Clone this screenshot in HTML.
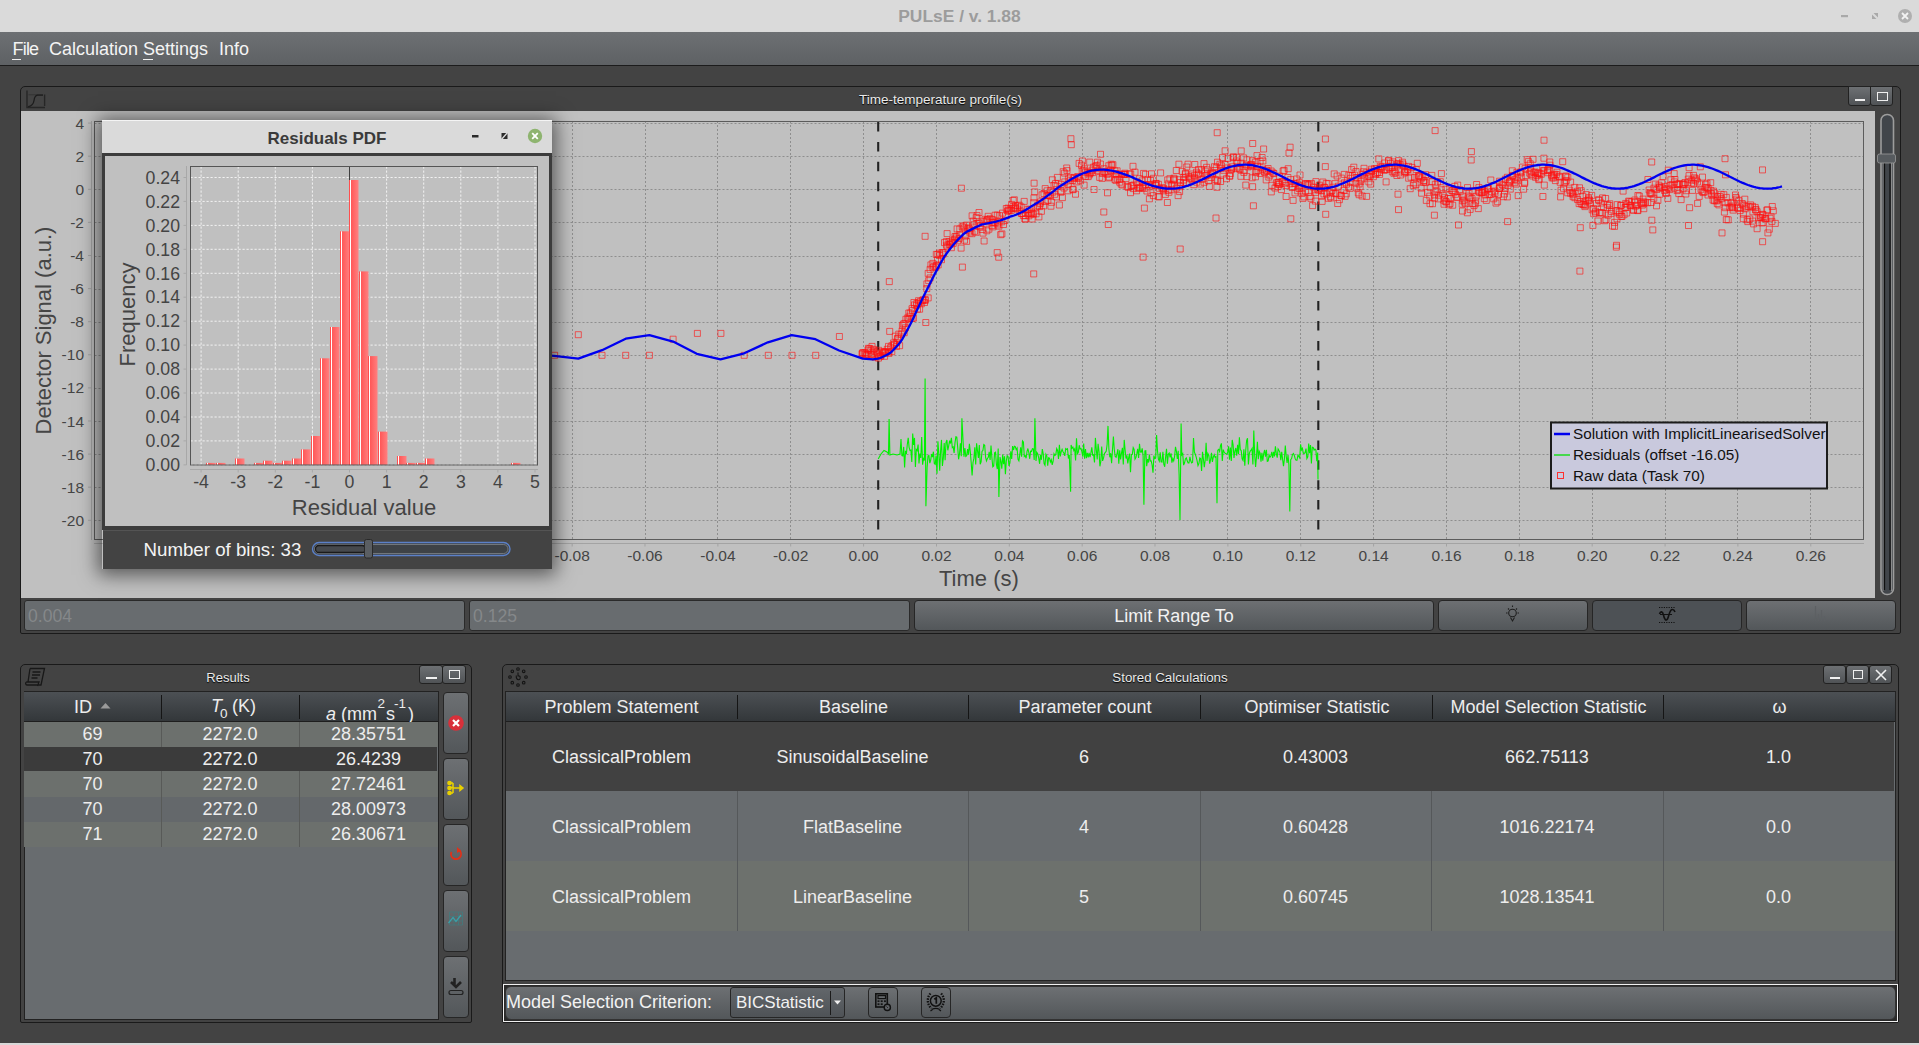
<!DOCTYPE html>
<html><head><meta charset="utf-8">
<style>
*{box-sizing:border-box;margin:0;padding:0}
html,body{width:1919px;height:1045px;overflow:hidden}
body{position:relative;background:#434343;font-family:"Liberation Sans",sans-serif;color:#f2f2f2}
.a{position:absolute}
#title{left:0;top:0;width:1919px;height:32px;background:#dadada}
#title .t{left:0;width:1919px;top:6px;text-align:center;font-weight:bold;font-size:17.4px;color:#9c9c9c}
#menu{left:0;top:32px;width:1919px;height:33px;background:linear-gradient(#6d7073,#5e6164)}
#menu span{position:absolute;top:7px;font-size:18px;color:#f4f4f4}
#mline{left:0;top:65px;width:1919px;height:1px;background:#1c1c1c}
.frame{border:1px solid #1a1a1a;border-radius:5px 5px 2px 2px}
.ftitle{font-size:13.5px;color:#eaeaea;text-shadow:0 1px 1px #000;text-align:center}
.fbtn{background:linear-gradient(#6d7073,#505356);border:1px solid #222;border-radius:3px}
.btn{background:linear-gradient(#6d7073,#53575a);border:1px solid #262626;border-radius:4px}
.field{background:#686c6f;border:1px solid #2a2a2a;border-radius:3px}
.hdr{background:linear-gradient(#4c5054,#33373a);}
.hdr span,.cell{position:absolute;text-align:center;font-size:18px;color:#ededed}
svg text{font-family:"Liberation Sans",sans-serif}
</style></head><body>

<div id="title" class="a"><div class="a t">PULsE / v. 1.88</div>
<svg class="a" style="left:0;top:0" width="1919" height="32">
<rect x="1841" y="15" width="7" height="2.2" fill="#a9a9a9"/>
<path d="M1872 19 L1872 14.5 L1876.5 19 Z M1878 13 L1878 17.5 L1873.5 13 Z" fill="#a9a9a9"/>
<circle cx="1905" cy="16" r="7" fill="#afafaf"/>
<path d="M1902 13 L1908 19 M1908 13 L1902 19" stroke="#f2f2f2" stroke-width="1.8"/>
</svg>
</div>
<div id="menu" class="a">
<span style="left:12.5px;letter-spacing:-0.8px">File</span>
<span style="left:49px">Calculation Settings</span>
<span style="left:219px">Info</span>
<div class="a" style="left:12px;top:27px;width:9px;height:1px;background:#f0f0f0"></div>
<div class="a" style="left:143px;top:27px;width:10px;height:1px;background:#f0f0f0"></div>
</div>
<div id="mline" class="a"></div>

<!-- ========== chart frame ========== -->
<div class="a frame" style="left:20px;top:86px;width:1881px;height:548px"></div>
<svg class="a" style="left:26px;top:89px" width="22" height="20"><path d="M1 1.5 V18.5 H19 M18.6 5.5 V17" fill="none" stroke="#262626" stroke-width="1.4"/><path d="M2.5 5.8 H17" stroke="#333" stroke-width="1"/><path d="M2.2 17.6 C6 17 7.5 15 8 11.5 C8.5 8 9.5 6.5 11.5 6.2 H17" fill="none" stroke="#1c1c1c" stroke-width="1.3"/></svg>
<div class="a ftitle" style="left:600px;width:681px;top:92px">Time-temperature profile(s)</div>
<div class="a fbtn" style="left:1848px;top:86px;width:23px;height:20px;border-radius:0 0 3px 3px"><div class="a" style="left:6px;top:12px;width:10px;height:2px;background:#f0f0f0"></div></div>
<div class="a fbtn" style="left:1870px;top:86px;width:23px;height:20px;border-radius:0 0 3px 3px"><div class="a" style="left:6px;top:5px;width:11px;height:9px;border:1.5px solid #f0f0f0"></div></div>
<div class="a" style="left:21px;top:111px;width:1854px;height:487px;background:#c0c0c0"></div>

<svg class="a" style="left:0;top:0" width="1919" height="1045">
<g font-size="15.5" fill="#454545">
<path d="M572.5 121V539.5M645.5 121V539.5M717.5 121V539.5M790.5 121V539.5M863.5 121V539.5M936.5 121V539.5M1009.5 121V539.5M1082.5 121V539.5M1155.5 121V539.5M1227.5 121V539.5M1300.5 121V539.5M1373.5 121V539.5M1446.5 121V539.5M1519.5 121V539.5M1592.5 121V539.5M1665.5 121V539.5M1737.5 121V539.5M1810.5 121V539.5M94.5 123.5H1863.5M94.5 156.5H1863.5M94.5 189.5H1863.5M94.5 222.5H1863.5M94.5 256.5H1863.5M94.5 289.5H1863.5M94.5 322.5H1863.5M94.5 355.5H1863.5M94.5 388.5H1863.5M94.5 421.5H1863.5M94.5 454.5H1863.5M94.5 487.5H1863.5M94.5 520.5H1863.5" stroke="#8e8e8e" stroke-width="1" stroke-dasharray="2,2" fill="none"/>
<rect x="94.5" y="121.5" width="1769" height="418" fill="none" stroke="#5c5c5c" stroke-width="1"/>
<path d="M91.5 121V540 M94 543.5H1864" stroke="#a3a3a3" stroke-width="1"/>
<path d="M572.2 543.5v3M645 543.5v3M717.9 543.5v3M790.7 543.5v3M863.6 543.5v3M936.5 543.5v3M1009.3 543.5v3M1082.2 543.5v3M1155 543.5v3M1227.9 543.5v3M1300.8 543.5v3M1373.6 543.5v3M1446.5 543.5v3M1519.3 543.5v3M1592.2 543.5v3M1665.1 543.5v3M1737.9 543.5v3M1810.8 543.5v3M88 123.1h3M88 156.2h3M88 189.3h3M88 222.4h3M88 255.5h3M88 288.6h3M88 321.7h3M88 354.8h3M88 387.9h3M88 421h3M88 454.1h3M88 487.2h3M88 520.3h3" stroke="#a3a3a3" stroke-width="1"/>
<g text-anchor="middle"><text x="572.2" y="560.5">-0.08</text><text x="645" y="560.5">-0.06</text><text x="717.9" y="560.5">-0.04</text><text x="790.7" y="560.5">-0.02</text><text x="863.6" y="560.5">0.00</text><text x="936.5" y="560.5">0.02</text><text x="1009.3" y="560.5">0.04</text><text x="1082.2" y="560.5">0.06</text><text x="1155" y="560.5">0.08</text><text x="1227.9" y="560.5">0.10</text><text x="1300.8" y="560.5">0.12</text><text x="1373.6" y="560.5">0.14</text><text x="1446.5" y="560.5">0.16</text><text x="1519.3" y="560.5">0.18</text><text x="1592.2" y="560.5">0.20</text><text x="1665.1" y="560.5">0.22</text><text x="1737.9" y="560.5">0.24</text><text x="1810.8" y="560.5">0.26</text></g>
<g text-anchor="end"><text x="84" y="128.6">4</text><text x="84" y="161.7">2</text><text x="84" y="194.8">0</text><text x="84" y="227.9">-2</text><text x="84" y="261">-4</text><text x="84" y="294.1">-6</text><text x="84" y="327.2">-8</text><text x="84" y="360.3">-10</text><text x="84" y="393.4">-12</text><text x="84" y="426.5">-14</text><text x="84" y="459.6">-16</text><text x="84" y="492.7">-18</text><text x="84" y="525.8">-20</text></g>
<text x="978.9" y="586" font-size="22" text-anchor="middle">Time (s)</text>
<text transform="translate(50.5 330.5) rotate(-90)" font-size="22" text-anchor="middle">Detector Signal (a.u.)</text>
</g>
<path d="M878.2 122V531 M1318.3 122V531" stroke="#222" stroke-width="2.1" stroke-dasharray="9.5,10.4"/>
<path d="M878.2 459 L881 454 L884 450.5 L887 452 L888.5 454 L889.1 419 L889.9 455 L893 454 L897 455 L900 454 L901 439 L901.9 455.6 L902.8 455.9 L903.7 446.9 L904.6 467.5 L905.5 450.9 L906.4 454 L907.3 444.5 L908.2 437.9 L909.1 447.3 L910 450.5 L910.9 450.1 L911.8 461.9 L912.7 433.5 L913.6 444.9 L914.5 437.9 L915.4 466.9 L916.3 449.5 L917.2 450.6 L918.1 444.5 L919 463.4 L919.9 453.5 L920.8 458 L921.7 437 L922.6 464.7 L923.5 458.7 L924.4 460.4 L925.1 378.4 L925.9 506.3 L927.1 467.4 L928 455.9 L928.9 455.6 L929.8 463.2 L930.7 460.1 L931.6 454 L932.5 457.1 L933.4 451.7 L934.3 463.4 L935.2 464.3 L936.1 455.5 L937 473.8 L937.9 441.2 L938.8 453.2 L939.7 470.8 L940.6 451.1 L941.5 439.9 L942.4 465.9 L943.3 458.1 L944.2 443 L945.1 460.1 L946 442.6 L946.9 440 L947.8 450.3 L948.7 445.8 L949.6 440.6 L950.5 443.5 L951.4 437.8 L952.3 447.7 L953.2 446.9 L954.1 452.9 L955 442.6 L955.9 436.8 L956.8 437.2 L957.7 447.4 L958.6 459.3 L959.5 453.8 L960.4 443.4 L961.3 456.2 L961.9 418.2 L963.1 441.8 L964 456.8 L964.9 448 L965.8 456.5 L966.7 455.7 L967.6 449.2 L968.5 454.6 L969.4 443.9 L970.3 451.7 L971.2 462.8 L972.1 475.5 L973 462.5 L973.9 458.4 L974.8 447.3 L975.7 464.5 L976.6 443.2 L977.5 450.7 L978.4 457.9 L979.3 445 L980.2 464.3 L981.1 461.9 L982 451.4 L982.9 450.5 L983.8 444.5 L984.7 445.2 L985.6 457.3 L986.5 460.9 L987.4 458.5 L988.3 457.3 L989.2 451.9 L990.1 460 L991 445.5 L991.9 457.7 L992.8 466.9 L993.7 466.1 L994.6 452.9 L995.5 452.3 L996.4 464.2 L997.3 469.1 L998.2 448.6 L998.9 497.1 L1000 457.1 L1000.9 461.3 L1001.8 468.7 L1002.7 454.6 L1003.6 464.1 L1004.5 456.2 L1005.4 474.3 L1006.3 460.9 L1007.2 455.8 L1008.1 456.8 L1009 465.9 L1009.9 462.9 L1010.8 451.2 L1011.7 458.9 L1012.6 446 L1013.5 450 L1014.4 446.2 L1015.3 446.6 L1016.2 449.6 L1017.1 448.1 L1018 459.3 L1018.9 460.8 L1019.8 454.4 L1020.7 447.2 L1021.6 456.6 L1022.5 440.9 L1023.4 441.9 L1024.3 456.5 L1025.2 455.5 L1026.1 458.3 L1027 451.6 L1027.9 448.5 L1028.8 452.5 L1029.7 458.8 L1030.6 451.2 L1031.5 451.5 L1032.4 448.7 L1033.3 448.9 L1034.2 459.9 L1034.9 418.2 L1036 461 L1036.9 452.4 L1037.8 454 L1038.7 457.8 L1039.6 463.8 L1040.5 454.8 L1041.4 459.8 L1042.3 449 L1043.2 453.6 L1044.1 463.5 L1045 465.3 L1045.9 454.2 L1046.8 455.8 L1047.7 465.6 L1048.6 457.8 L1049.5 458.2 L1050.4 462 L1051.3 459.8 L1052.2 464.9 L1053.1 461.5 L1054 453.8 L1054.9 455.4 L1055.8 454.7 L1056.7 448.6 L1057.6 450.5 L1058.5 458.9 L1059.4 444.9 L1060.3 456.4 L1061.2 451.7 L1062.1 449.4 L1063 451.8 L1063.9 453 L1064.8 455.9 L1065.7 448.6 L1066.6 449.5 L1067.5 448.8 L1068.4 458.5 L1069.3 454.9 L1070.6 491.7 L1071.1 444.9 L1072 448.2 L1072.9 447.1 L1073.8 450.5 L1074.7 448.9 L1075.6 460.5 L1076.5 438.2 L1077.4 453.7 L1078.3 452.3 L1079.2 445.2 L1080.1 449 L1081 448.6 L1081.9 451.7 L1082.8 456.6 L1083.7 443.5 L1084.6 458.6 L1085.5 449.1 L1086.4 458.1 L1087.3 452.8 L1088.2 457.3 L1089.1 452.9 L1090 457.1 L1090.9 453 L1091.8 447.3 L1092.7 455.1 L1093.6 454.7 L1094.5 462.4 L1095.4 437.9 L1096.3 449.5 L1097.2 459.5 L1098.1 443.9 L1099 451.6 L1099.9 466.3 L1100.8 461.4 L1101.7 446.5 L1102.6 460.9 L1103.5 458.2 L1104.4 453.8 L1105.3 452.4 L1106.2 451.3 L1107.1 444.6 L1108 425.9 L1108.9 449.3 L1109.8 457.3 L1110.7 453.2 L1111.6 463.2 L1112.5 449.5 L1113.4 436.6 L1114.3 449.8 L1115.2 456.5 L1116.1 457.3 L1117 454 L1117.9 449.2 L1118.8 463.6 L1119.7 450.4 L1120.6 459.5 L1121.5 453.1 L1122.4 447.9 L1123.3 464.4 L1124.2 439.9 L1125.1 449.8 L1126 458.5 L1126.9 455.4 L1127.8 463.4 L1128.7 457.6 L1129.6 453.5 L1130.5 472.2 L1131.4 454.7 L1132.3 454.3 L1133.2 447.6 L1134.1 449.4 L1135 459.2 L1135.9 457.5 L1136.8 453.9 L1137.7 448.8 L1138.6 458 L1139.5 443.7 L1140.4 452.1 L1141.3 452.2 L1142.2 448.4 L1143.1 456 L1143.9 504.7 L1144.9 451 L1145.8 450.8 L1146.7 466.3 L1147.6 459.1 L1148.5 462.5 L1149.4 454.6 L1150.3 461 L1151.2 460.8 L1152.1 465 L1153 472.6 L1153.9 455.6 L1154.8 458.6 L1155.7 457.9 L1156.6 435 L1157.5 450.8 L1158.4 459 L1159.3 461.1 L1160.2 452.3 L1161.1 461.8 L1162 462.1 L1162.9 451.7 L1163.8 464.1 L1164.7 466.7 L1165.6 457.3 L1166.5 448.7 L1167.4 463.7 L1168.3 454.2 L1169.2 453 L1170.1 457.4 L1171 453.3 L1171.9 462.7 L1172.8 458.6 L1173.7 460.8 L1174.6 456.3 L1175.5 446.8 L1176.4 451.3 L1177.3 459 L1178.2 450.8 L1179.1 474.6 L1180 520 L1181.1 423.6 L1181.8 454.8 L1182.7 453.6 L1183.6 465.1 L1184.5 463.1 L1185.4 458.9 L1186.3 457.8 L1187.2 460.8 L1188.1 462.9 L1189 462.9 L1189.9 456.8 L1190.8 461 L1191.7 463 L1192.6 462.3 L1193.5 438 L1194.4 452.1 L1195.3 454.3 L1196.2 457.2 L1197.1 460.8 L1198 465.7 L1198.9 463.6 L1199.8 458 L1200.7 458.6 L1201.6 471 L1202.5 451.7 L1203.4 458.8 L1204.3 467.1 L1205.2 460.1 L1206.1 442.8 L1207 460.9 L1207.9 453.4 L1208.8 455.3 L1209.7 463.6 L1210.6 459.6 L1211.5 452.8 L1212.4 461.9 L1213.3 457.2 L1214.2 454.6 L1215.1 457.3 L1216 456.6 L1217 503.2 L1217.8 450.2 L1218.7 449.4 L1219.6 451.5 L1220.5 445.7 L1221.4 443.4 L1222.3 461 L1223.2 449.6 L1224.1 452 L1225 453.2 L1225.9 453.8 L1226.8 454.3 L1227.7 452.3 L1228.6 446.4 L1229.5 459.6 L1230.4 447.5 L1231.3 461 L1232.2 439.9 L1233.1 444.7 L1234 458 L1234.9 451.2 L1235.8 448 L1236.7 455.8 L1237.6 444.8 L1238.5 453.9 L1239.4 437.4 L1240.3 449.6 L1241.2 450.5 L1242.1 458.9 L1243 460.5 L1243.9 449.4 L1244.8 465.6 L1245.7 450.8 L1246.6 440.7 L1247.5 438.3 L1248.4 464.4 L1249.3 453.7 L1250.2 451.1 L1251.1 450.2 L1252 448.5 L1252.9 464.4 L1253.8 430.5 L1254.7 454.6 L1255.6 466.9 L1256.5 456.6 L1257.4 441.9 L1258.3 459.3 L1259.2 451.3 L1260.1 453.2 L1261 461.8 L1261.9 452.8 L1262.8 460.7 L1263.7 453.7 L1264.6 450 L1265.5 456.6 L1266.4 449.8 L1267.3 461.4 L1268.2 460.9 L1269.1 455 L1270 457.1 L1270.9 456 L1271.8 451.9 L1272.7 457.9 L1273.6 451.9 L1274.5 456.4 L1275.4 446.2 L1276.3 453.5 L1277.2 457.6 L1278.1 449 L1279 450.6 L1279.9 452.3 L1280.8 460.1 L1281.7 451.9 L1282.6 459.1 L1283.5 466.2 L1284.4 459 L1285.3 445.6 L1286.2 456.1 L1287.1 462.9 L1288 455.1 L1288.9 464.8 L1289.8 511.6 L1290.7 459.7 L1291.6 458.5 L1292.5 454.5 L1293.4 453.5 L1294.3 455.4 L1295.2 458.7 L1296.1 460.2 L1297 460.2 L1297.9 455.2 L1298.8 456.4 L1299.7 457.9 L1300.6 444.4 L1301.5 449.9 L1302.4 448.4 L1303.3 453.2 L1304.2 453.4 L1305.1 452.7 L1306 448.5 L1306.9 458.6 L1307.8 456.8 L1308.7 443.6 L1309.6 453.1 L1310.5 445 L1311.4 463.5 L1312.3 447.2 L1313.2 447.4 L1314.1 450.2 L1315 449.1 L1315.9 450.1 L1316.8 461.2 L1317.7 452.5 L1318 479.4" stroke="#00f000" stroke-width="1.1" fill="none"/>
<defs><clipPath id="pc"><rect x="95" y="122" width="1768" height="417"/></clipPath></defs><path clip-path="url(#pc)" d="M551.6 352.3h6v6h-6zM575.3 331.7h6v6h-6zM599 352.3h6v6h-6zM622.7 352.3h6v6h-6zM646.4 352.3h6v6h-6zM670.1 336.2h6v6h-6zM694.4 330.4h6v6h-6zM717.9 330.4h6v6h-6zM741.2 352.3h6v6h-6zM765.3 352.3h6v6h-6zM789 352.3h6v6h-6zM812.7 352.3h6v6h-6zM836.4 333.5h6v6h-6zM859.2 351h6v6h-6zM859.3 350.2h6v6h-6zM860 349.6h6v6h-6zM862.2 351.2h6v6h-6zM861.8 349.5h6v6h-6zM863.2 352.5h6v6h-6zM863.2 351.3h6v6h-6zM865 350.9h6v6h-6zM865.1 347h6v6h-6zM865.4 345.3h6v6h-6zM866.8 345.5h6v6h-6zM867.9 347.2h6v6h-6zM868.4 351.5h6v6h-6zM869 343.4h6v6h-6zM870.2 350.9h6v6h-6zM870.6 346.4h6v6h-6zM871.2 348.1h6v6h-6zM872 354.2h6v6h-6zM873.8 350.9h6v6h-6zM874 349.2h6v6h-6zM874.9 351.3h6v6h-6zM875.7 347.3h6v6h-6zM875.5 355.1h6v6h-6zM877.3 353.5h6v6h-6zM879.2 348.7h6v6h-6zM878.1 352.5h6v6h-6zM880 350.2h6v6h-6zM880.8 349.1h6v6h-6zM881.6 349.1h6v6h-6zM881.6 353.3h6v6h-6zM882.5 349.3h6v6h-6zM882.9 348.7h6v6h-6zM884.3 346.3h6v6h-6zM885.9 350.4h6v6h-6zM885.5 343.4h6v6h-6zM885.6 349h6v6h-6zM887.5 344.7h6v6h-6zM888.8 348.7h6v6h-6zM888.9 342.7h6v6h-6zM890.9 341.7h6v6h-6zM890.6 339.9h6v6h-6zM891.5 341.1h6v6h-6zM892.3 333.2h6v6h-6zM893.5 343.4h6v6h-6zM893.7 339.7h6v6h-6zM895.1 335.1h6v6h-6zM894.5 335.6h6v6h-6zM895.8 331.1h6v6h-6zM896.6 342.7h6v6h-6zM898.2 331.2h6v6h-6zM899.1 328h6v6h-6zM899.4 322.5h6v6h-6zM900.4 321h6v6h-6zM901.2 329.7h6v6h-6zM901.8 320.4h6v6h-6zM902.9 316.3h6v6h-6zM902.4 324.8h6v6h-6zM904.7 314.9h6v6h-6zM905.8 310h6v6h-6zM905.7 316h6v6h-6zM907.3 310h6v6h-6zM906.9 313.2h6v6h-6zM909 305.7h6v6h-6zM909 315.5h6v6h-6zM909.5 307.6h6v6h-6zM910.4 315.1h6v6h-6zM910.9 299.5h6v6h-6zM911.5 301.9h6v6h-6zM913.8 300.5h6v6h-6zM913.4 302.3h6v6h-6zM914.5 306.1h6v6h-6zM915.6 297.7h6v6h-6zM915.5 299.8h6v6h-6zM916.6 306.2h6v6h-6zM917.5 298.4h6v6h-6zM918.3 300.8h6v6h-6zM920 296.8h6v6h-6zM919.8 297.6h6v6h-6zM921.5 299.5h6v6h-6zM922.2 296.5h6v6h-6zM922.2 297.4h6v6h-6zM923.8 285.6h6v6h-6zM925.2 294.9h6v6h-6zM923.9 280.9h6v6h-6zM925.7 277.6h6v6h-6zM925.2 270.4h6v6h-6zM927.1 274.9h6v6h-6zM927.1 266.4h6v6h-6zM927.9 261.9h6v6h-6zM929.9 264.7h6v6h-6zM929.8 260.4h6v6h-6zM930.8 263.4h6v6h-6zM933.2 262.9h6v6h-6zM932.8 264.3h6v6h-6zM933.3 251.4h6v6h-6zM934.5 256.9h6v6h-6zM935.2 261.9h6v6h-6zM934.8 251.4h6v6h-6zM936.5 250.1h6v6h-6zM936.9 252.5h6v6h-6zM938.5 256.7h6v6h-6zM939.2 249.5h6v6h-6zM940.1 251.2h6v6h-6zM940.3 249.7h6v6h-6zM941.5 239.6h6v6h-6zM943.4 238.6h6v6h-6zM943.6 242.1h6v6h-6zM944.1 230.6h6v6h-6zM944.1 243.3h6v6h-6zM946.2 241.3h6v6h-6zM947.2 241.4h6v6h-6zM946 238.7h6v6h-6zM948.4 244.7h6v6h-6zM948.8 239.6h6v6h-6zM949.5 237.3h6v6h-6zM950.2 240.4h6v6h-6zM952 233.6h6v6h-6zM951.7 236.4h6v6h-6zM953.2 235h6v6h-6zM953.3 233.4h6v6h-6zM954.1 225.9h6v6h-6zM954.6 237.8h6v6h-6zM956.8 226h6v6h-6zM956.3 235.4h6v6h-6zM956.8 231.8h6v6h-6zM958.1 245.1h6v6h-6zM959.2 223.8h6v6h-6zM960.6 222.8h6v6h-6zM961.5 237.2h6v6h-6zM962.6 233.1h6v6h-6zM961.4 224.9h6v6h-6zM963.6 238.4h6v6h-6zM963.5 222.1h6v6h-6zM964.7 226h6v6h-6zM965.3 224.9h6v6h-6zM966.5 225.8h6v6h-6zM967 229.9h6v6h-6zM966.6 228h6v6h-6zM969 230.7h6v6h-6zM969.1 212.8h6v6h-6zM971.5 228.3h6v6h-6zM970.2 218.1h6v6h-6zM971 221.7h6v6h-6zM973.2 214.6h6v6h-6zM973 229.3h6v6h-6zM973.9 220.6h6v6h-6zM974 212.6h6v6h-6zM975.8 220h6v6h-6zM976 209.5h6v6h-6zM977 223.8h6v6h-6zM977.3 222.5h6v6h-6zM979.1 226.5h6v6h-6zM980 230.1h6v6h-6zM980.3 218.2h6v6h-6zM981.1 238h6v6h-6zM982.1 216.3h6v6h-6zM983.4 218h6v6h-6zM983.8 227.8h6v6h-6zM984.1 217h6v6h-6zM984.7 216.7h6v6h-6zM985.2 213.3h6v6h-6zM985.9 226.2h6v6h-6zM987 215.7h6v6h-6zM989.3 216.5h6v6h-6zM989 222.6h6v6h-6zM989.9 223.9h6v6h-6zM990.1 219.5h6v6h-6zM992.1 220.1h6v6h-6zM991.3 219.4h6v6h-6zM992.1 212.2h6v6h-6zM994.6 220.1h6v6h-6zM994.3 212h6v6h-6zM995 221.9h6v6h-6zM995.9 223.2h6v6h-6zM996.4 212.6h6v6h-6zM997.7 231.7h6v6h-6zM998.8 218.8h6v6h-6zM998.9 230.9h6v6h-6zM999.5 210.1h6v6h-6zM1000.5 221.5h6v6h-6zM1002.7 212.5h6v6h-6zM1002 217.4h6v6h-6zM1003.3 205.5h6v6h-6zM1005.1 205.1h6v6h-6zM1004.5 208h6v6h-6zM1005.8 207h6v6h-6zM1006 208h6v6h-6zM1008.2 207.4h6v6h-6zM1007.8 205.7h6v6h-6zM1008.6 201.4h6v6h-6zM1010.2 197.5h6v6h-6zM1010.5 205.2h6v6h-6zM1011.3 196.8h6v6h-6zM1012.2 205.3h6v6h-6zM1012.2 204.6h6v6h-6zM1012.5 202.6h6v6h-6zM1014.5 206.1h6v6h-6zM1014.8 203h6v6h-6zM1016.2 202.2h6v6h-6zM1017 208h6v6h-6zM1018.1 203.9h6v6h-6zM1018.7 210.5h6v6h-6zM1018.9 210.4h6v6h-6zM1020.4 212.6h6v6h-6zM1021.2 198.4h6v6h-6zM1021.9 216h6v6h-6zM1022.4 216h6v6h-6zM1022.4 212.6h6v6h-6zM1024.9 206.2h6v6h-6zM1025.9 212.8h6v6h-6zM1025.5 210.7h6v6h-6zM1026.7 206.4h6v6h-6zM1027.9 211.1h6v6h-6zM1028.5 209.1h6v6h-6zM1029.1 216h6v6h-6zM1029.1 210.4h6v6h-6zM1030.4 211.1h6v6h-6zM1031 194.8h6v6h-6zM1030.7 199.7h6v6h-6zM1033.1 210.8h6v6h-6zM1034.1 203.8h6v6h-6zM1034.7 202.3h6v6h-6zM1035.9 213.9h6v6h-6zM1036.5 203.6h6v6h-6zM1037.3 200.5h6v6h-6zM1037.6 198.9h6v6h-6zM1038.4 208.3h6v6h-6zM1039.1 191.8h6v6h-6zM1040.6 202.9h6v6h-6zM1041 190.5h6v6h-6zM1042.2 185.6h6v6h-6zM1042.1 198.5h6v6h-6zM1043.8 192.7h6v6h-6zM1044.1 187.8h6v6h-6zM1044.9 197.4h6v6h-6zM1045.3 192.5h6v6h-6zM1046.9 192.6h6v6h-6zM1047.8 187.4h6v6h-6zM1047.9 203.2h6v6h-6zM1048.6 199.3h6v6h-6zM1049.8 189.2h6v6h-6zM1049.4 176.8h6v6h-6zM1051 182.4h6v6h-6zM1051.7 191.3h6v6h-6zM1052.5 180.6h6v6h-6zM1053.4 193.9h6v6h-6zM1054.1 183.3h6v6h-6zM1054.4 174.4h6v6h-6zM1056.4 202h6v6h-6zM1057.9 189.2h6v6h-6zM1058.2 181.4h6v6h-6zM1057.9 188h6v6h-6zM1059.4 194.6h6v6h-6zM1060.2 168.7h6v6h-6zM1061 185h6v6h-6zM1061.6 170.1h6v6h-6zM1061.8 178.9h6v6h-6zM1063.7 165h6v6h-6zM1065 187.8h6v6h-6zM1064 167.6h6v6h-6zM1065.4 175.9h6v6h-6zM1065.3 181.2h6v6h-6zM1066.8 177.8h6v6h-6zM1067.4 174.4h6v6h-6zM1069.7 177.5h6v6h-6zM1069.8 186.3h6v6h-6zM1070.1 186.7h6v6h-6zM1071 174.5h6v6h-6zM1071.1 175.5h6v6h-6zM1072.5 191.2h6v6h-6zM1073.7 178.9h6v6h-6zM1074.7 173.5h6v6h-6zM1075.8 175.3h6v6h-6zM1075.4 174.7h6v6h-6zM1076.1 160.4h6v6h-6zM1077.6 177.8h6v6h-6zM1078.5 162.2h6v6h-6zM1079.2 168h6v6h-6zM1079.4 158h6v6h-6zM1080.7 167.3h6v6h-6zM1081.1 182.1h6v6h-6zM1081.5 165.8h6v6h-6zM1082.4 173.5h6v6h-6zM1082.4 169.7h6v6h-6zM1084.6 168.9h6v6h-6zM1085.2 173.6h6v6h-6zM1086.2 171.9h6v6h-6zM1086.7 159.1h6v6h-6zM1086.8 170.4h6v6h-6zM1087.7 169.7h6v6h-6zM1089.1 167.1h6v6h-6zM1089.6 169.6h6v6h-6zM1090.7 164.1h6v6h-6zM1091 186.5h6v6h-6zM1092.8 163.3h6v6h-6zM1093.1 165.7h6v6h-6zM1093.7 162.5h6v6h-6zM1094.5 159.2h6v6h-6zM1094.5 167.7h6v6h-6zM1096.7 174.4h6v6h-6zM1097.5 151.3h6v6h-6zM1097.4 161h6v6h-6zM1099.4 170.5h6v6h-6zM1099.1 175.4h6v6h-6zM1100.8 209h6v6h-6zM1101.3 168.4h6v6h-6zM1100.8 165.7h6v6h-6zM1102.7 169.1h6v6h-6zM1104 171.2h6v6h-6zM1105.5 174.9h6v6h-6zM1105.1 170.7h6v6h-6zM1105.8 162.7h6v6h-6zM1106.4 174.1h6v6h-6zM1107.5 167.1h6v6h-6zM1108.2 161.2h6v6h-6zM1108.9 162.4h6v6h-6zM1109.9 161.7h6v6h-6zM1112 176.7h6v6h-6zM1111.9 167.9h6v6h-6zM1113.1 170.5h6v6h-6zM1113 177.3h6v6h-6zM1113.4 171.8h6v6h-6zM1114.6 176h6v6h-6zM1114.1 167.8h6v6h-6zM1116.3 176.5h6v6h-6zM1116.7 179.2h6v6h-6zM1118.5 171.3h6v6h-6zM1118.2 181.1h6v6h-6zM1119.3 182h6v6h-6zM1120.7 171.4h6v6h-6zM1121.2 171.3h6v6h-6zM1121.9 170.2h6v6h-6zM1122.2 171.4h6v6h-6zM1123 175.6h6v6h-6zM1124.2 183.4h6v6h-6zM1125.3 184.4h6v6h-6zM1126.2 171h6v6h-6zM1127.5 189.7h6v6h-6zM1127.7 170.9h6v6h-6zM1128 182.9h6v6h-6zM1128.8 182.7h6v6h-6zM1130 163.3h6v6h-6zM1130.3 185.6h6v6h-6zM1130.7 182h6v6h-6zM1132 169.2h6v6h-6zM1133.5 179.2h6v6h-6zM1133.6 187.8h6v6h-6zM1135.1 185h6v6h-6zM1135.1 179.8h6v6h-6zM1136.6 175.7h6v6h-6zM1136.3 185.1h6v6h-6zM1137.3 184.8h6v6h-6zM1139.5 184.8h6v6h-6zM1139 177.9h6v6h-6zM1140 183h6v6h-6zM1140.6 170.4h6v6h-6zM1141.1 185.4h6v6h-6zM1142.5 181.6h6v6h-6zM1142.5 171.3h6v6h-6zM1144.9 176.8h6v6h-6zM1143.9 188h6v6h-6zM1145.5 181.5h6v6h-6zM1146.4 195.8h6v6h-6zM1147.5 177.4h6v6h-6zM1147.9 189.8h6v6h-6zM1148.5 170.8h6v6h-6zM1149 182.1h6v6h-6zM1150.4 175.3h6v6h-6zM1150.4 192.6h6v6h-6zM1152.5 182.2h6v6h-6zM1153.2 180.4h6v6h-6zM1152.8 182.7h6v6h-6zM1152.9 180.7h6v6h-6zM1155.4 181.3h6v6h-6zM1155.2 193.7h6v6h-6zM1156.2 193.8h6v6h-6zM1156.5 185.3h6v6h-6zM1157.6 169.9h6v6h-6zM1159.1 184.9h6v6h-6zM1160.5 185.1h6v6h-6zM1160.2 186.6h6v6h-6zM1160.9 187.8h6v6h-6zM1162.4 191.4h6v6h-6zM1164.4 199.5h6v6h-6zM1165.3 187.3h6v6h-6zM1164.7 176.9h6v6h-6zM1165.3 180.9h6v6h-6zM1165.9 189.3h6v6h-6zM1166.9 175.7h6v6h-6zM1168.4 182.3h6v6h-6zM1168.8 186.7h6v6h-6zM1169.2 182h6v6h-6zM1170.9 175.2h6v6h-6zM1170.6 177.1h6v6h-6zM1171.3 183h6v6h-6zM1171.2 176.2h6v6h-6zM1173.3 167.5h6v6h-6zM1173.3 185.2h6v6h-6zM1175.1 192.6h6v6h-6zM1176.3 176.7h6v6h-6zM1176.6 188.6h6v6h-6zM1176.9 183.7h6v6h-6zM1177.5 179.5h6v6h-6zM1180.3 179.4h6v6h-6zM1179.2 168.4h6v6h-6zM1180.7 177h6v6h-6zM1180.8 174.4h6v6h-6zM1182.4 171.1h6v6h-6zM1182.6 170.2h6v6h-6zM1183.3 180.2h6v6h-6zM1183.7 164h6v6h-6zM1185 161.2h6v6h-6zM1185.5 173.2h6v6h-6zM1186.8 175.3h6v6h-6zM1187.1 174h6v6h-6zM1188.8 176.2h6v6h-6zM1189.7 171h6v6h-6zM1190.8 181.7h6v6h-6zM1191.3 172.6h6v6h-6zM1191.3 175h6v6h-6zM1191.8 161.5h6v6h-6zM1193.8 179.2h6v6h-6zM1193.5 169.2h6v6h-6zM1195.1 171.1h6v6h-6zM1195.5 171.1h6v6h-6zM1195.5 166.5h6v6h-6zM1197.3 181h6v6h-6zM1198.7 176.3h6v6h-6zM1198.5 167.1h6v6h-6zM1200.2 175.8h6v6h-6zM1201.1 179.3h6v6h-6zM1201 160.6h6v6h-6zM1202.4 168.2h6v6h-6zM1203.6 164.3h6v6h-6zM1204 171.9h6v6h-6zM1202.8 172.5h6v6h-6zM1204.5 166.9h6v6h-6zM1205.6 177.9h6v6h-6zM1206.4 183.4h6v6h-6zM1207.7 171h6v6h-6zM1208 174.5h6v6h-6zM1209.5 170.2h6v6h-6zM1209.8 171h6v6h-6zM1211.5 163.7h6v6h-6zM1211.9 167.5h6v6h-6zM1212.4 176.7h6v6h-6zM1213.3 164.2h6v6h-6zM1214.1 177.2h6v6h-6zM1214.7 177.8h6v6h-6zM1214.5 159.2h6v6h-6zM1216.9 161.3h6v6h-6zM1217.6 178.5h6v6h-6zM1217.8 165.3h6v6h-6zM1218.5 162.8h6v6h-6zM1219.5 154.6h6v6h-6zM1220.7 167.3h6v6h-6zM1220 171h6v6h-6zM1222.1 161.5h6v6h-6zM1222.1 147.8h6v6h-6zM1223.5 175.7h6v6h-6zM1225 155.3h6v6h-6zM1224.8 164.9h6v6h-6zM1227.3 170.5h6v6h-6zM1226.8 172.9h6v6h-6zM1226.6 173.2h6v6h-6zM1228.6 165.7h6v6h-6zM1228.4 166.3h6v6h-6zM1229.2 163.8h6v6h-6zM1230.2 154.6h6v6h-6zM1230.3 153.8h6v6h-6zM1233.3 165.6h6v6h-6zM1233.4 158h6v6h-6zM1234.7 160.1h6v6h-6zM1233.6 154.3h6v6h-6zM1234.4 164.1h6v6h-6zM1236.4 165.8h6v6h-6zM1237.2 166.4h6v6h-6zM1237.9 160.2h6v6h-6zM1238.2 147.9h6v6h-6zM1237.9 173.3h6v6h-6zM1240.6 154.9h6v6h-6zM1240.9 169.4h6v6h-6zM1241.2 167.1h6v6h-6zM1242.8 182.1h6v6h-6zM1244 156.8h6v6h-6zM1243.9 173.6h6v6h-6zM1243.4 162h6v6h-6zM1245 163.9h6v6h-6zM1247.5 162.6h6v6h-6zM1247.9 163.2h6v6h-6zM1248.5 161.3h6v6h-6zM1247.9 161.7h6v6h-6zM1249.1 174.8h6v6h-6zM1249.6 157.7h6v6h-6zM1252.5 173.8h6v6h-6zM1252.3 159.2h6v6h-6zM1252.9 169.6h6v6h-6zM1253.1 168.3h6v6h-6zM1254 152.6h6v6h-6zM1254.5 163.4h6v6h-6zM1255 167.6h6v6h-6zM1257.1 158.2h6v6h-6zM1257.2 170.5h6v6h-6zM1259.1 154.5h6v6h-6zM1260.6 146h6v6h-6zM1259.9 158h6v6h-6zM1259.7 166.2h6v6h-6zM1261.6 169.2h6v6h-6zM1263.6 167.2h6v6h-6zM1261.9 169h6v6h-6zM1263.2 176.9h6v6h-6zM1264 168h6v6h-6zM1265.1 165.5h6v6h-6zM1265.8 174.1h6v6h-6zM1266.9 172.1h6v6h-6zM1268.3 188.9h6v6h-6zM1268.1 168h6v6h-6zM1268.8 182.3h6v6h-6zM1269.9 169.9h6v6h-6zM1270.8 170.5h6v6h-6zM1272 185h6v6h-6zM1273.4 179.8h6v6h-6zM1275 179.8h6v6h-6zM1275.1 183.6h6v6h-6zM1275.7 181.4h6v6h-6zM1275.2 179.6h6v6h-6zM1276.4 173.1h6v6h-6zM1276.4 181.1h6v6h-6zM1278.5 186.6h6v6h-6zM1279.2 178.5h6v6h-6zM1280.1 168h6v6h-6zM1281.1 167.4h6v6h-6zM1282.1 180.1h6v6h-6zM1283 182.6h6v6h-6zM1282.9 179.2h6v6h-6zM1283.1 193.5h6v6h-6zM1284.9 174.5h6v6h-6zM1285.2 165.7h6v6h-6zM1287 180.8h6v6h-6zM1287.7 176.6h6v6h-6zM1287.8 215.8h6v6h-6zM1289.2 183.8h6v6h-6zM1289.2 184.4h6v6h-6zM1291.2 180.5h6v6h-6zM1290.1 197.4h6v6h-6zM1292 189.9h6v6h-6zM1292.4 180.3h6v6h-6zM1293.7 176h6v6h-6zM1294.7 187.8h6v6h-6zM1296.1 185.5h6v6h-6zM1296 183h6v6h-6zM1296.4 179.6h6v6h-6zM1297 172h6v6h-6zM1296.9 182.8h6v6h-6zM1298.8 185.7h6v6h-6zM1298.8 190.5h6v6h-6zM1299.9 195.4h6v6h-6zM1300.9 193.9h6v6h-6zM1302.6 188.1h6v6h-6zM1302.1 180.9h6v6h-6zM1303 180.8h6v6h-6zM1304.4 180.7h6v6h-6zM1305.2 182h6v6h-6zM1305.5 189.4h6v6h-6zM1306.1 181.1h6v6h-6zM1307 193.4h6v6h-6zM1307.9 195.3h6v6h-6zM1308.5 180.6h6v6h-6zM1309.6 202.6h6v6h-6zM1310.5 184.1h6v6h-6zM1312.7 189.4h6v6h-6zM1312.4 198.1h6v6h-6zM1312.9 178.6h6v6h-6zM1312.5 186.8h6v6h-6zM1314.3 186h6v6h-6zM1315.6 187.1h6v6h-6zM1316.4 182.2h6v6h-6zM1316.6 185.8h6v6h-6zM1318.5 187.8h6v6h-6zM1319.1 198.4h6v6h-6zM1318.5 193.3h6v6h-6zM1319.9 179h6v6h-6zM1321 184.2h6v6h-6zM1320.9 190.9h6v6h-6zM1321.8 184.6h6v6h-6zM1323.3 180.4h6v6h-6zM1323.5 191h6v6h-6zM1325.2 180.7h6v6h-6zM1325.4 195.3h6v6h-6zM1327.1 189h6v6h-6zM1327.4 193.7h6v6h-6zM1328 194.9h6v6h-6zM1328.9 187.4h6v6h-6zM1330.2 184.2h6v6h-6zM1330.7 190.4h6v6h-6zM1331.2 170.9h6v6h-6zM1332.1 180.6h6v6h-6zM1332.5 190.2h6v6h-6zM1334.1 173h6v6h-6zM1333.9 190.8h6v6h-6zM1334.7 200.5h6v6h-6zM1335.4 183.2h6v6h-6zM1336.4 196.7h6v6h-6zM1338.3 192.8h6v6h-6zM1337.9 192.5h6v6h-6zM1338.4 175.1h6v6h-6zM1341.4 179.8h6v6h-6zM1341.3 171.4h6v6h-6zM1340.9 187.4h6v6h-6zM1342.1 193.3h6v6h-6zM1343.3 190.8h6v6h-6zM1343.5 181.1h6v6h-6zM1345.5 184h6v6h-6zM1345.8 172.1h6v6h-6zM1347 185.4h6v6h-6zM1347.7 175.3h6v6h-6zM1348.6 166.6h6v6h-6zM1347.9 178.7h6v6h-6zM1349.3 172.5h6v6h-6zM1350.8 164.2h6v6h-6zM1351.5 172.1h6v6h-6zM1353 168.5h6v6h-6zM1352.8 180.1h6v6h-6zM1354.1 174.8h6v6h-6zM1353.8 185.1h6v6h-6zM1355.3 189.9h6v6h-6zM1356.1 191.7h6v6h-6zM1356 181h6v6h-6zM1357.1 183.7h6v6h-6zM1358.3 176.3h6v6h-6zM1357.8 178.4h6v6h-6zM1359.7 171.3h6v6h-6zM1361 165.3h6v6h-6zM1360.6 168.7h6v6h-6zM1361.6 175.1h6v6h-6zM1363.6 193.4h6v6h-6zM1363.2 169.7h6v6h-6zM1365.3 173.3h6v6h-6zM1365.9 178.9h6v6h-6zM1366.4 173.7h6v6h-6zM1367.6 171.3h6v6h-6zM1367.7 181.1h6v6h-6zM1368.4 168.2h6v6h-6zM1368.6 166.2h6v6h-6zM1371.5 165.7h6v6h-6zM1370.4 173.7h6v6h-6zM1372.8 171.4h6v6h-6zM1372.7 170.5h6v6h-6zM1373.2 165.8h6v6h-6zM1374.5 169.5h6v6h-6zM1375.8 155.9h6v6h-6zM1376.6 171.4h6v6h-6zM1376.4 169.5h6v6h-6zM1377.3 163.2h6v6h-6zM1378 164.7h6v6h-6zM1378.4 166.3h6v6h-6zM1379.3 163.7h6v6h-6zM1381.7 160h6v6h-6zM1381.2 167.3h6v6h-6zM1382 166.6h6v6h-6zM1383.7 166.6h6v6h-6zM1383.1 178.9h6v6h-6zM1385.5 157.9h6v6h-6zM1385.8 164.4h6v6h-6zM1385.8 157.3h6v6h-6zM1386.8 165.9h6v6h-6zM1387.4 160.4h6v6h-6zM1389.3 168.8h6v6h-6zM1389 164.5h6v6h-6zM1389.9 158.9h6v6h-6zM1390.9 170.3h6v6h-6zM1391.4 168.1h6v6h-6zM1392.6 169.8h6v6h-6zM1393.9 172.5h6v6h-6zM1394.9 160.6h6v6h-6zM1394.1 161h6v6h-6zM1394.6 162.8h6v6h-6zM1395.6 157.6h6v6h-6zM1397.1 161.7h6v6h-6zM1397.7 172h6v6h-6zM1399.8 161h6v6h-6zM1399.5 159.2h6v6h-6zM1401.4 170h6v6h-6zM1401.1 163.2h6v6h-6zM1402 168.7h6v6h-6zM1401.5 168.2h6v6h-6zM1402.7 169h6v6h-6zM1404.5 166.3h6v6h-6zM1405.6 163.4h6v6h-6zM1405.1 166.7h6v6h-6zM1405.7 175.2h6v6h-6zM1407.2 185.7h6v6h-6zM1409 164.4h6v6h-6zM1408 174.2h6v6h-6zM1410.9 179.9h6v6h-6zM1410.3 182.4h6v6h-6zM1411.7 174.6h6v6h-6zM1413 181.6h6v6h-6zM1413.2 166.6h6v6h-6zM1414.3 160.3h6v6h-6zM1415.9 173.8h6v6h-6zM1415.5 172.6h6v6h-6zM1416.4 173.2h6v6h-6zM1418 175.9h6v6h-6zM1418.1 185.1h6v6h-6zM1418.6 190.2h6v6h-6zM1419.2 174.4h6v6h-6zM1420.5 179.2h6v6h-6zM1421 177.7h6v6h-6zM1421 177.8h6v6h-6zM1422.6 171.7h6v6h-6zM1422.7 179.6h6v6h-6zM1423.3 197.4h6v6h-6zM1424.7 189.4h6v6h-6zM1426.8 193.1h6v6h-6zM1427.2 184.6h6v6h-6zM1427 200.7h6v6h-6zM1429.4 178.8h6v6h-6zM1428.8 172.4h6v6h-6zM1429.5 200.7h6v6h-6zM1431.4 191.9h6v6h-6zM1431.6 195.1h6v6h-6zM1432.1 188.8h6v6h-6zM1432.3 181.3h6v6h-6zM1434.4 179.2h6v6h-6zM1434 188.2h6v6h-6zM1435.7 192.2h6v6h-6zM1435.7 195.9h6v6h-6zM1437.3 178.7h6v6h-6zM1438.3 186.8h6v6h-6zM1438.4 170.6h6v6h-6zM1440.7 197.2h6v6h-6zM1439.9 190.7h6v6h-6zM1441.6 194.7h6v6h-6zM1441 201.2h6v6h-6zM1442.8 198.6h6v6h-6zM1442.9 186.2h6v6h-6zM1443.2 198.9h6v6h-6zM1445.1 195.5h6v6h-6zM1445.9 201.8h6v6h-6zM1447.4 195.5h6v6h-6zM1447 200.6h6v6h-6zM1446.8 185.5h6v6h-6zM1449 187.6h6v6h-6zM1449.7 202.2h6v6h-6zM1449.9 187.8h6v6h-6zM1451.1 189.1h6v6h-6zM1451.8 183.4h6v6h-6zM1453.8 194.3h6v6h-6zM1452.5 191.3h6v6h-6zM1454.7 182.1h6v6h-6zM1454.7 194.2h6v6h-6zM1455.5 222h6v6h-6zM1457.2 188.7h6v6h-6zM1456.6 186.7h6v6h-6zM1459.8 197.8h6v6h-6zM1459.2 201.2h6v6h-6zM1459.7 193.1h6v6h-6zM1459.5 208h6v6h-6zM1461.1 197h6v6h-6zM1462.3 200.6h6v6h-6zM1461.8 199.2h6v6h-6zM1464.4 209.8h6v6h-6zM1464.5 184.6h6v6h-6zM1466 190h6v6h-6zM1465.1 193h6v6h-6zM1466.6 194.3h6v6h-6zM1467.1 206.4h6v6h-6zM1469.3 187.9h6v6h-6zM1469 195.5h6v6h-6zM1469.6 200.4h6v6h-6zM1471 202.6h6v6h-6zM1472.7 197.9h6v6h-6zM1472.3 200.7h6v6h-6zM1473.2 193.2h6v6h-6zM1473.6 181.5h6v6h-6zM1475.3 205.6h6v6h-6zM1475.7 188.6h6v6h-6zM1475.9 184.6h6v6h-6zM1476.7 189.6h6v6h-6zM1478.7 189.9h6v6h-6zM1479 189.5h6v6h-6zM1479.5 186.8h6v6h-6zM1481.3 195.6h6v6h-6zM1481 188.4h6v6h-6zM1481.8 187.8h6v6h-6zM1482.2 192h6v6h-6zM1483.3 197.4h6v6h-6zM1485.1 185.5h6v6h-6zM1485 184.9h6v6h-6zM1486.2 191.5h6v6h-6zM1484.6 186.2h6v6h-6zM1487.8 177h6v6h-6zM1488.2 191.6h6v6h-6zM1488.9 188.7h6v6h-6zM1490.7 183.2h6v6h-6zM1490.7 195.8h6v6h-6zM1491.9 188h6v6h-6zM1492 190.6h6v6h-6zM1493 200.1h6v6h-6zM1494.6 198.7h6v6h-6zM1496.2 185.5h6v6h-6zM1495.5 191.5h6v6h-6zM1496.6 178.2h6v6h-6zM1496.5 185.2h6v6h-6zM1497.1 184.1h6v6h-6zM1500.4 193.7h6v6h-6zM1499 181.3h6v6h-6zM1500 182.3h6v6h-6zM1501.5 191h6v6h-6zM1502.3 185.4h6v6h-6zM1502.4 176.2h6v6h-6zM1504.3 193.9h6v6h-6zM1504.4 174.3h6v6h-6zM1505 182.5h6v6h-6zM1506.4 178.8h6v6h-6zM1506.6 179h6v6h-6zM1507.3 186.1h6v6h-6zM1507.4 177.4h6v6h-6zM1509.5 172.4h6v6h-6zM1509.3 167.8h6v6h-6zM1509.9 173h6v6h-6zM1511.7 176.5h6v6h-6zM1511.8 179.7h6v6h-6zM1513.1 181.1h6v6h-6zM1513.9 169.3h6v6h-6zM1514.2 174.4h6v6h-6zM1515.2 192.6h6v6h-6zM1514.7 177.8h6v6h-6zM1517.8 170h6v6h-6zM1517.7 169h6v6h-6zM1518.3 173.9h6v6h-6zM1519.3 164.1h6v6h-6zM1520.6 186.2h6v6h-6zM1521.6 180.4h6v6h-6zM1521.7 179.2h6v6h-6zM1522.7 172.6h6v6h-6zM1522.1 165.6h6v6h-6zM1524.2 156.7h6v6h-6zM1525.4 158.6h6v6h-6zM1526.7 170.1h6v6h-6zM1527.2 160.8h6v6h-6zM1527.9 171.6h6v6h-6zM1527.6 164.8h6v6h-6zM1528 168.3h6v6h-6zM1529.7 173h6v6h-6zM1530 156.3h6v6h-6zM1530.9 169.5h6v6h-6zM1532.1 169h6v6h-6zM1532.6 174.3h6v6h-6zM1534.3 172.6h6v6h-6zM1534.5 170.7h6v6h-6zM1535.8 176.7h6v6h-6zM1536.1 175.9h6v6h-6zM1535.6 169.8h6v6h-6zM1536.9 170.8h6v6h-6zM1539.7 164.2h6v6h-6zM1538.3 171.3h6v6h-6zM1541.2 167.7h6v6h-6zM1540.9 155.2h6v6h-6zM1540.3 167.8h6v6h-6zM1541.3 182.1h6v6h-6zM1544.6 167h6v6h-6zM1544.7 169.7h6v6h-6zM1545.2 167h6v6h-6zM1546.8 159h6v6h-6zM1546.6 167.1h6v6h-6zM1546.9 162.2h6v6h-6zM1548.6 172h6v6h-6zM1549.1 174.9h6v6h-6zM1549 173.2h6v6h-6zM1550.4 174.9h6v6h-6zM1550.7 172.7h6v6h-6zM1551.4 171.2h6v6h-6zM1552.4 177.6h6v6h-6zM1553.3 171.5h6v6h-6zM1554 169.2h6v6h-6zM1556 173.3h6v6h-6zM1556.9 174.1h6v6h-6zM1557.2 179.3h6v6h-6zM1557.6 193.9h6v6h-6zM1558 187.2h6v6h-6zM1559.7 158.7h6v6h-6zM1560.5 185.3h6v6h-6zM1561.2 180.3h6v6h-6zM1562.1 179h6v6h-6zM1562.5 173.2h6v6h-6zM1563.3 177.5h6v6h-6zM1563.2 173.2h6v6h-6zM1564.8 174.3h6v6h-6zM1564.7 189.8h6v6h-6zM1566.7 187.2h6v6h-6zM1567.6 179.1h6v6h-6zM1567.4 190.3h6v6h-6zM1569.1 189.3h6v6h-6zM1569.3 190.2h6v6h-6zM1570.2 191.7h6v6h-6zM1570.1 193.7h6v6h-6zM1571.9 194.7h6v6h-6zM1571.7 184.4h6v6h-6zM1574.6 196.5h6v6h-6zM1574.6 188.2h6v6h-6zM1576.5 184.8h6v6h-6zM1576.1 200.6h6v6h-6zM1577.3 198.5h6v6h-6zM1578.2 187.7h6v6h-6zM1578.3 200.9h6v6h-6zM1579.8 193.1h6v6h-6zM1579.9 201.5h6v6h-6zM1581 201.8h6v6h-6zM1582.6 202.2h6v6h-6zM1582.6 198.2h6v6h-6zM1581.9 203.6h6v6h-6zM1583.2 191.6h6v6h-6zM1585 198h6v6h-6zM1585.7 196h6v6h-6zM1585.7 194.6h6v6h-6zM1586.2 197.3h6v6h-6zM1587 199.9h6v6h-6zM1588.7 192.4h6v6h-6zM1589.9 222.4h6v6h-6zM1589.2 206.8h6v6h-6zM1590.7 210.7h6v6h-6zM1590.5 205.5h6v6h-6zM1592.5 208.3h6v6h-6zM1592.6 210h6v6h-6zM1593.5 200.5h6v6h-6zM1595.9 197.4h6v6h-6zM1594.9 218h6v6h-6zM1595.6 196.7h6v6h-6zM1596.4 209.7h6v6h-6zM1598 200h6v6h-6zM1597.7 209.8h6v6h-6zM1599.3 209.9h6v6h-6zM1599.5 194.9h6v6h-6zM1600.5 204.4h6v6h-6zM1601.7 217.7h6v6h-6zM1603 216.6h6v6h-6zM1602.6 195.5h6v6h-6zM1604.2 204.7h6v6h-6zM1605.2 212.1h6v6h-6zM1604.6 201.8h6v6h-6zM1606.3 202.5h6v6h-6zM1606.8 200.8h6v6h-6zM1607.9 210.4h6v6h-6zM1608.5 208.4h6v6h-6zM1609.5 223h6v6h-6zM1611.6 219.4h6v6h-6zM1611.5 223.4h6v6h-6zM1612.6 207.8h6v6h-6zM1613.8 207.8h6v6h-6zM1614.3 201.6h6v6h-6zM1614 215.8h6v6h-6zM1616.5 211.3h6v6h-6zM1616.1 209.2h6v6h-6zM1617.7 202.5h6v6h-6zM1618.3 202.2h6v6h-6zM1618.1 213.5h6v6h-6zM1619 213.4h6v6h-6zM1621.1 211.7h6v6h-6zM1620.1 188.1h6v6h-6zM1622.1 204.5h6v6h-6zM1622.7 200.4h6v6h-6zM1623 204.5h6v6h-6zM1623.7 210h6v6h-6zM1624 201.2h6v6h-6zM1626.3 198.8h6v6h-6zM1625.7 198.1h6v6h-6zM1627.2 202.7h6v6h-6zM1628.8 198.6h6v6h-6zM1627.7 202.5h6v6h-6zM1630.6 207.2h6v6h-6zM1630.3 207h6v6h-6zM1631.9 197h6v6h-6zM1631.9 199.6h6v6h-6zM1632.4 203.1h6v6h-6zM1633.7 202.3h6v6h-6zM1634.4 207.2h6v6h-6zM1634.9 192.5h6v6h-6zM1634.9 207.6h6v6h-6zM1636.3 193.1h6v6h-6zM1638 200.1h6v6h-6zM1639 200.2h6v6h-6zM1639.3 202.1h6v6h-6zM1640 196.1h6v6h-6zM1640.5 198.9h6v6h-6zM1640.6 200.8h6v6h-6zM1640.8 205.7h6v6h-6zM1642.2 199.3h6v6h-6zM1644.9 176.5h6v6h-6zM1644.7 199.8h6v6h-6zM1646.1 187h6v6h-6zM1647 190.7h6v6h-6zM1647.3 189.6h6v6h-6zM1648.2 199.5h6v6h-6zM1648.3 190.7h6v6h-6zM1649.1 191h6v6h-6zM1650.9 185.2h6v6h-6zM1650.8 195.3h6v6h-6zM1652.3 181.1h6v6h-6zM1653.5 202.8h6v6h-6zM1653.8 186.5h6v6h-6zM1654.9 197.4h6v6h-6zM1655.9 182.2h6v6h-6zM1656.6 184.8h6v6h-6zM1656.4 183.9h6v6h-6zM1656.8 191.2h6v6h-6zM1658.7 179.8h6v6h-6zM1658.1 184.4h6v6h-6zM1660.1 173.7h6v6h-6zM1661.9 183.5h6v6h-6zM1661.6 187.5h6v6h-6zM1662.9 189.9h6v6h-6zM1663.4 190.4h6v6h-6zM1663.1 186.3h6v6h-6zM1664.8 195.4h6v6h-6zM1665.2 185.3h6v6h-6zM1665.3 167.2h6v6h-6zM1666.9 182.3h6v6h-6zM1666.6 186.6h6v6h-6zM1667.9 176.8h6v6h-6zM1669.2 181.5h6v6h-6zM1671.4 178.9h6v6h-6zM1671.2 170.6h6v6h-6zM1671.1 185.1h6v6h-6zM1671.9 176.5h6v6h-6zM1673.8 181h6v6h-6zM1674.7 181.5h6v6h-6zM1674.1 187.6h6v6h-6zM1674.9 186.7h6v6h-6zM1676.3 180.6h6v6h-6zM1675.8 190.6h6v6h-6zM1678.1 196.6h6v6h-6zM1680 185.9h6v6h-6zM1679.6 181.4h6v6h-6zM1680.9 181.8h6v6h-6zM1680.9 180.9h6v6h-6zM1682 179.5h6v6h-6zM1682.8 191h6v6h-6zM1683.2 187.7h6v6h-6zM1684.6 180h6v6h-6zM1685.3 176.1h6v6h-6zM1686.1 164.7h6v6h-6zM1686 172.6h6v6h-6zM1688.9 177.1h6v6h-6zM1688.7 180h6v6h-6zM1689.5 187.4h6v6h-6zM1690.9 180.5h6v6h-6zM1690.5 172.4h6v6h-6zM1691.4 174.8h6v6h-6zM1692.7 177.2h6v6h-6zM1694.5 178.9h6v6h-6zM1694.6 200.4h6v6h-6zM1693.1 175.9h6v6h-6zM1696.7 181.1h6v6h-6zM1696.2 193.4h6v6h-6zM1697.3 163.8h6v6h-6zM1698 186.3h6v6h-6zM1699.2 188.6h6v6h-6zM1700.2 189.6h6v6h-6zM1699.5 174.1h6v6h-6zM1701.2 188.8h6v6h-6zM1702 184.7h6v6h-6zM1704 180.3h6v6h-6zM1702.8 181.6h6v6h-6zM1703.9 184.4h6v6h-6zM1705 192h6v6h-6zM1705.2 185.3h6v6h-6zM1708.2 190.5h6v6h-6zM1708 187.6h6v6h-6zM1707.7 179.7h6v6h-6zM1709 192.1h6v6h-6zM1710.1 197.1h6v6h-6zM1710.5 188.1h6v6h-6zM1711.5 197.7h6v6h-6zM1711.4 189.9h6v6h-6zM1713.3 197.9h6v6h-6zM1714.4 193.6h6v6h-6zM1714.3 200.6h6v6h-6zM1714.8 197h6v6h-6zM1715.9 201.9h6v6h-6zM1716.9 193.6h6v6h-6zM1718.1 191.3h6v6h-6zM1719 229.9h6v6h-6zM1718.6 195.7h6v6h-6zM1720.8 191.7h6v6h-6zM1721.4 209.1h6v6h-6zM1721.9 199.7h6v6h-6zM1722.2 204.7h6v6h-6zM1723.3 216.6h6v6h-6zM1723.3 194.4h6v6h-6zM1725.1 199.8h6v6h-6zM1725.2 216.8h6v6h-6zM1726.8 204.3h6v6h-6zM1728.3 200.2h6v6h-6zM1728.9 203h6v6h-6zM1729.1 204.1h6v6h-6zM1729.7 204.8h6v6h-6zM1729.9 199.3h6v6h-6zM1730.1 207.1h6v6h-6zM1732.5 192h6v6h-6zM1733.7 196.1h6v6h-6zM1733 194.5h6v6h-6zM1735.1 205h6v6h-6zM1734.6 205h6v6h-6zM1736 197.7h6v6h-6zM1737.3 204.9h6v6h-6zM1737.1 207.6h6v6h-6zM1739.2 200.5h6v6h-6zM1740 202h6v6h-6zM1740.3 215.7h6v6h-6zM1740.4 211.1h6v6h-6zM1741.8 196.2h6v6h-6zM1742.2 205.8h6v6h-6zM1742.8 203.8h6v6h-6zM1744.2 216.7h6v6h-6zM1745.2 203.4h6v6h-6zM1744.8 218.6h6v6h-6zM1747.2 204.2h6v6h-6zM1746.8 216h6v6h-6zM1747.6 201.9h6v6h-6zM1749.6 218.1h6v6h-6zM1749.5 203.4h6v6h-6zM1750.6 220.9h6v6h-6zM1749.9 208.8h6v6h-6zM1752.2 204.4h6v6h-6zM1752.5 207h6v6h-6zM1753 206.4h6v6h-6zM1754.1 208.7h6v6h-6zM1754.1 225.7h6v6h-6zM1755.9 214.7h6v6h-6zM1757.3 212.6h6v6h-6zM1757.5 214.6h6v6h-6zM1758.9 214.8h6v6h-6zM1759.1 219.9h6v6h-6zM1759.3 211.3h6v6h-6zM1760 211.7h6v6h-6zM1760.4 219.6h6v6h-6zM1762.2 215.8h6v6h-6zM1762.7 215.5h6v6h-6zM1763.8 207.2h6v6h-6zM1764.6 206.8h6v6h-6zM1764.9 229.9h6v6h-6zM1766.3 226.2h6v6h-6zM1767.1 215.3h6v6h-6zM1768.1 213.9h6v6h-6zM1768.9 218.4h6v6h-6zM1769.3 203.5h6v6h-6zM1770.3 207.8h6v6h-6zM1772.3 220.4h6v6h-6zM886.7 328.4h6v6h-6zM886.3 278.6h6v6h-6zM922.8 319.5h6v6h-6zM922.1 233.3h6v6h-6zM959.4 264.1h6v6h-6zM958.4 185.2h6v6h-6zM995.7 254.2h6v6h-6zM994.2 249.6h6v6h-6zM1031.1 180.2h6v6h-6zM1030.7 270.9h6v6h-6zM1031.7 188.9h6v6h-6zM1068.3 141.7h6v6h-6zM1067.9 135.7h6v6h-6zM1104.5 189.8h6v6h-6zM1105.3 221.5h6v6h-6zM1141.4 205.1h6v6h-6zM1140.1 254.1h6v6h-6zM1175.9 161.2h6v6h-6zM1177.2 246h6v6h-6zM1214.2 129.7h6v6h-6zM1213 215h6v6h-6zM1213.9 184.3h6v6h-6zM1249.7 140.5h6v6h-6zM1250.4 202.8h6v6h-6zM1249.6 183.7h6v6h-6zM1287.1 144.2h6v6h-6zM1286 150h6v6h-6zM1322.3 163.6h6v6h-6zM1322.4 136h6v6h-6zM1322.7 211.3h6v6h-6zM1359.1 193h6v6h-6zM1358.9 105.2h6v6h-6zM1395 191.2h6v6h-6zM1395.5 206.6h6v6h-6zM1431.4 212.2h6v6h-6zM1432.1 127.6h6v6h-6zM1468.2 157h6v6h-6zM1468.4 148.6h6v6h-6zM1504.6 218.6h6v6h-6zM1504.6 112.6h6v6h-6zM1539.9 193.5h6v6h-6zM1541 137.2h6v6h-6zM1577.3 224.7h6v6h-6zM1576.9 268.1h6v6h-6zM1613.5 242.3h6v6h-6zM1613.3 244.1h6v6h-6zM1648.7 159h6v6h-6zM1649.8 226.9h6v6h-6zM1648.8 217.2h6v6h-6zM1686.6 204.7h6v6h-6zM1685.5 222.5h6v6h-6zM1722.5 171.8h6v6h-6zM1722 155.7h6v6h-6zM1759.6 238.7h6v6h-6zM1759.5 166.9h6v6h-6z" stroke="#ff1010" stroke-opacity="0.62" stroke-width="1" fill="none"/>
<path d="M540 350 L551.8 355.6 L578.3 358.7 L602 350.2 L625.7 338.7 L649.4 335.2 L673.1 341.6 L696.8 353.8 L720.5 359.3 L744.2 353.3 L767.9 342.3 L791.7 335.2 L815.4 339.2 L839.1 350.5 L862.8 358.7 L872.8 359.3 L876 358.8 L878 358.6 L880 358 L882 357.2 L884 356.2 L886 355.3 L888 354.2 L890 353.1 L892 351.3 L894 349.2 L896 347.1 L898 344.9 L900 342.6 L902 339.7 L904 336 L906 332.4 L908 328.7 L910 325 L912 321.1 L914 316.7 L916 312.3 L918 308 L920 303.7 L922 299.5 L924 295.4 L926 291.4 L928 287.4 L930 283.4 L932 279.4 L934 275.4 L936 271.6 L938 267.9 L940 264.2 L942 260.7 L944 257.2 L946 254.4 L948 251.6 L950 249 L952 246.4 L954 243.9 L956 241.7 L958 239.6 L960 237.5 L962 235.6 L964 233.7 L966 232.3 L968 231.1 L970 230.1 L972 229.1 L974 228.1 L976 227.1 L978 226.2 L980 225.3 L982 224.4 L984 224.1 L986 223.7 L988 223.3 L990 222.9 L992 222.5 L994 222 L996 221.6 L998 221 L1000 220.5 L1002 219.8 L1004 219.1 L1006 218.4 L1008 217.6 L1010 216.7 L1012 216.1 L1014 215.5 L1016 214.7 L1018 213.9 L1020 213 L1022 212 L1024 211 L1026 209.8 L1028 208.6 L1030 207.3 L1032 205.9 L1034 204.8 L1036 203.6 L1038 202.4 L1040 201.1 L1042 199.8 L1044 198.4 L1046 196.9 L1048 195.4 L1050 193.9 L1052 192.3 L1054 190.8 L1056 189.2 L1058 187.6 L1060 186.3 L1062 185 L1064 183.7 L1066 182.4 L1068 181.2 L1070 180 L1072 178.8 L1074 177.7 L1076 176.6 L1078 175.6 L1080 174.6 L1082 173.8 L1084 173 L1086 172.3 L1088 171.6 L1090 171.1 L1092 170.7 L1094 170.3 L1096 170 L1098 169.8 L1100 169.7 L1102 169.7 L1104 169.7 L1106 169.9 L1108 170.1 L1110 170.4 L1112 170.7 L1114 171.2 L1116 171.6 L1118 172.2 L1120 172.8 L1122 173.4 L1124 174.1 L1126 174.8 L1128 175.5 L1130 176.3 L1132 177.1 L1134 178.1 L1136 179 L1138 179.9 L1140 180.8 L1142 181.7 L1144 182.6 L1146 183.4 L1148 184.2 L1150 184.9 L1152 185.6 L1154 186.2 L1156 186.7 L1158 187.2 L1160 187.6 L1162 188 L1164 188.3 L1166 188.5 L1168 188.6 L1170 188.7 L1172 188.7 L1174 188.6 L1176 188.4 L1178 188.1 L1180 187.7 L1182 187.3 L1184 186.8 L1186 186.2 L1188 185.6 L1190 184.8 L1192 184.1 L1194 183.2 L1196 182.4 L1198 181.5 L1200 180.5 L1202 179.6 L1204 178.6 L1206 177.6 L1208 176.5 L1210 175.5 L1212 174.5 L1214 173.6 L1216 172.6 L1218 171.7 L1220 170.8 L1222 169.9 L1224 169.1 L1226 168.3 L1228 167.6 L1230 167 L1232 166.5 L1234 166 L1236 165.6 L1238 165.2 L1240 165 L1242 164.8 L1244 164.7 L1246 164.7 L1248 164.8 L1250 165 L1252 165.2 L1254 165.6 L1256 166 L1258 166.5 L1260 167 L1262 167.6 L1264 168.3 L1266 169.1 L1268 169.9 L1270 170.8 L1272 171.7 L1274 172.6 L1276 173.6 L1278 174.5 L1280 175.5 L1282 176.5 L1284 177.6 L1286 178.6 L1288 179.6 L1290 180.5 L1292 181.5 L1294 182.4 L1296 183.2 L1298 184.1 L1300 184.8 L1302 185.6 L1304 186.2 L1306 186.8 L1308 187.3 L1310 187.7 L1312 188.1 L1314 188.4 L1316 188.6 L1318 188.7 L1320 188.7 L1322 188.6 L1324 188.5 L1326 188.3 L1328 188 L1330 187.6 L1332 187.1 L1334 186.6 L1336 186 L1338 185.3 L1340 184.5 L1342 183.7 L1344 182.9 L1346 182 L1348 181.1 L1350 180.1 L1352 179.2 L1354 178.2 L1356 177.2 L1358 176.1 L1360 175.1 L1362 174.1 L1364 173.2 L1366 172.2 L1368 171.3 L1370 170.4 L1372 169.6 L1374 168.8 L1376 168.1 L1378 167.4 L1380 166.8 L1382 166.2 L1384 165.8 L1386 165.4 L1388 165.1 L1390 164.9 L1392 164.8 L1394 164.7 L1396 164.7 L1398 164.9 L1400 165.1 L1402 165.3 L1404 165.7 L1406 166.2 L1408 166.7 L1410 167.3 L1412 167.9 L1414 168.6 L1416 169.4 L1418 170.2 L1420 171.1 L1422 172 L1424 173 L1426 173.9 L1428 174.9 L1430 175.9 L1432 177 L1434 178 L1436 179 L1438 179.9 L1440 180.9 L1442 181.8 L1444 182.7 L1446 183.6 L1448 184.4 L1450 185.1 L1452 185.8 L1454 186.4 L1456 187 L1458 187.5 L1460 187.9 L1462 188.2 L1464 188.5 L1466 188.6 L1468 188.7 L1470 188.7 L1472 188.6 L1474 188.4 L1476 188.2 L1478 187.8 L1480 187.4 L1482 186.9 L1484 186.3 L1486 185.7 L1488 185 L1490 184.2 L1492 183.4 L1494 182.6 L1496 181.7 L1498 180.7 L1500 179.7 L1502 178.8 L1504 177.8 L1506 176.8 L1508 175.7 L1510 174.7 L1512 173.7 L1514 172.8 L1516 171.8 L1518 170.9 L1520 170.1 L1522 169.3 L1524 168.5 L1526 167.8 L1528 167.1 L1530 166.6 L1532 166.1 L1534 165.6 L1536 165.3 L1538 165 L1540 164.8 L1542 164.7 L1544 164.7 L1546 164.8 L1548 164.9 L1550 165.2 L1552 165.5 L1554 165.9 L1556 166.4 L1558 166.9 L1560 167.5 L1562 168.2 L1564 168.9 L1566 169.7 L1568 170.6 L1570 171.5 L1572 172.4 L1574 173.4 L1576 174.3 L1578 175.3 L1580 176.3 L1582 177.4 L1584 178.4 L1586 179.4 L1588 180.3 L1590 181.3 L1592 182.2 L1594 183.1 L1596 183.9 L1598 184.7 L1600 185.4 L1602 186.1 L1604 186.7 L1606 187.2 L1608 187.7 L1610 188 L1612 188.3 L1614 188.5 L1616 188.7 L1618 188.7 L1620 188.7 L1622 188.5 L1624 188.3 L1626 188 L1628 187.7 L1630 187.2 L1632 186.7 L1634 186.1 L1636 185.4 L1638 184.7 L1640 183.9 L1642 183.1 L1644 182.2 L1646 181.3 L1648 180.3 L1650 179.4 L1652 178.4 L1654 177.4 L1656 176.3 L1658 175.3 L1660 174.3 L1662 173.4 L1664 172.4 L1666 171.5 L1668 170.6 L1670 169.7 L1672 168.9 L1674 168.2 L1676 167.5 L1678 166.9 L1680 166.4 L1682 165.9 L1684 165.5 L1686 165.2 L1688 164.9 L1690 164.8 L1692 164.7 L1694 164.7 L1696 164.8 L1698 165 L1700 165.3 L1702 165.6 L1704 166.1 L1706 166.6 L1708 167.1 L1710 167.8 L1712 168.5 L1714 169.3 L1716 170.1 L1718 170.9 L1720 171.8 L1722 172.8 L1724 173.7 L1726 174.7 L1728 175.7 L1730 176.8 L1732 177.8 L1734 178.8 L1736 179.7 L1738 180.7 L1740 181.7 L1742 182.6 L1744 183.4 L1746 184.2 L1748 185 L1750 185.7 L1752 186.3 L1754 186.9 L1756 187.4 L1758 187.8 L1760 188.2 L1762 188.4 L1764 188.6 L1766 188.7 L1768 188.7 L1770 188.6 L1772 188.5 L1774 188.2 L1776 187.9 L1778 187.5 L1780 187 L1782 186.4" stroke="#0000f0" stroke-width="2.3" fill="none" stroke-linejoin="round"/>
<rect x="1551" y="422.5" width="276" height="66" fill="#c9c9dd" stroke="#1c1c1c" stroke-width="2"/>
<path d="M1554 434H1570" stroke="#0000f0" stroke-width="2.5"/>
<path d="M1554 455H1570" stroke="#00e000" stroke-width="1.3"/>
<rect x="1557.5" y="472.5" width="6" height="6" fill="none" stroke="#ff3030" stroke-width="1"/>
<g font-size="15.3" fill="#111"><text x="1573" y="438.5">Solution with ImplicitLinearisedSolver</text>
<text x="1573" y="459.5">Residuals (offset -16.05)</text><text x="1573" y="480.5">Raw data (Task 70)</text></g>
<!-- slider -->
<rect x="1881" y="114.5" width="12.5" height="480" rx="6" fill="#41454a" stroke="#9c9c9c" stroke-width="1.6"/>
<path d="M1884.5 162V590 M1890 162V590" stroke="#101010" stroke-width="1.2"/>
<path d="M1883 162V591 M1891.5 162V591" stroke="#9c9c9c" stroke-width="0.8"/>
<rect x="1877.5" y="154" width="18" height="9" rx="2" fill="#575b5f" stroke="#999" stroke-width="0.8"/>
</svg>

<!-- bottom controls of chart frame -->
<div class="a field" style="left:24px;top:600px;width:441px;height:31px"><span class="a" style="left:3px;top:5px;font-size:17.6px;color:#85888a">0.004</span></div>
<div class="a field" style="left:469px;top:600px;width:441px;height:31px"><span class="a" style="left:3px;top:5px;font-size:17.6px;color:#85888a">0.125</span></div>
<div class="a btn" style="left:914px;top:600px;width:520px;height:31px"><span class="a" style="left:0;width:518px;top:5px;text-align:center;font-size:18px;color:#f2f2f2">Limit Range To</span></div>
<div class="a btn" style="left:1438px;top:600px;width:150px;height:31px"></div>
<div class="a" style="left:1592px;top:600px;width:150px;height:31px;background:#4d5155;border:1px solid #262626;border-radius:4px"></div>
<div class="a btn" style="left:1746px;top:600px;width:150px;height:31px"></div>
<svg class="a" style="left:0;top:590px" width="1919" height="50">
<g fill="none" stroke="#1e1e1e" stroke-width="1.1">
<circle cx="1512.5" cy="23" r="3.8"/><path d="M1510.5 27.5 L1512.5 31 L1514.5 27.5 M1512.5 15.5V17 M1506 23h1.5 M1517.5 23h1.5 M1508 18.5l1 1 M1517 18.5l-1 1"/>
</g>
<g fill="none" stroke="#111" stroke-width="1"><path d="M1659 17.5h16 M1659 32.5h16" stroke-dasharray="1.2,1.2"/><path d="M1659.5 24 C1660.5 21 1662.5 21 1663.5 25 C1664.5 30 1666 31 1667.5 29 C1669 26 1669.5 20 1672 19.5 C1673.5 19.3 1674.5 20.5 1675 22" stroke-width="1.6"/><path d="M1660 24.5h12" stroke-width="1"/></g>
<path d="M1815.5 16V31 M1818.5 31V24 M1821.5 31V20 M1824.5 31V26" stroke="#5d6063" stroke-width="1.2"/>
</svg>

<!-- ========== Results frame ========== -->
<div class="a frame" style="left:20px;top:664px;width:452px;height:359px"></div>
<svg class="a" style="left:24px;top:666px" width="24" height="22"><path d="M6 2.5 H20.5 L17 19 H3 C1.5 19 1 16.5 2.5 16 H15 L13.5 20 M6 2.5 L4 16 M8.5 6h8 M8 9h8 M7.5 12h6" fill="none" stroke="#181818" stroke-width="1.3"/></svg>
<div class="a ftitle" style="left:150px;width:156px;top:670px;font-size:13px">Results</div>
<div class="a fbtn" style="left:419px;top:665px;width:24px;height:19px"><div class="a" style="left:6px;top:11px;width:11px;height:2px;background:#f0f0f0"></div></div>
<div class="a fbtn" style="left:442px;top:665px;width:24px;height:19px"><div class="a" style="left:6px;top:4px;width:11px;height:9px;border:1.5px solid #f0f0f0"></div></div>
<div class="a" style="left:23.5px;top:691px;width:415px;height:329px;background:#686c6f;border:1px solid #222"></div>
<div class="a hdr" style="left:24px;top:692px;width:414px;height:30px;border-bottom:1px solid #1e1e1e">
<span style="left:0;width:118px;top:5px">ID</span>
<svg class="a" style="left:76px;top:10px" width="12" height="8"><path d="M0.5 6.5 L5.5 1 L10.5 6.5Z" fill="#9a9a9a"/></svg>
<svg class="a" style="left:-24px;top:-692px" width="500" height="740"><g fill="#ededed" font-size="18">
<text x="211" y="712" font-style="italic">T</text><text x="220" y="718" font-size="13.5">0</text><text x="232" y="712">(K)</text>
<text x="326" y="720" font-style="italic">a</text><text x="341" y="720">(mm</text><text x="377.5" y="708" font-size="13.5">2</text><text x="386" y="720">s</text><text x="394" y="708" font-size="13.5">-1</text><text x="408" y="720">)</text>
</g></svg>
<div class="a" style="left:137px;top:3px;width:1px;height:24px;background:#151515"></div>
<div class="a" style="left:275px;top:3px;width:1px;height:24px;background:#151515"></div>
</div>
<div class="a" style="left:24px;top:722px;width:414px;height:25px;background:#6c706d"></div>
<div class="a" style="left:24px;top:747px;width:413px;height:24px;background:#3b3b3b"></div>
<div class="a" style="left:24px;top:771px;width:414px;height:26px;background:#6c706d"></div>
<div class="a" style="left:24px;top:797px;width:414px;height:25px;background:#64686b"></div>
<div class="a" style="left:24px;top:822px;width:414px;height:25px;background:#6c706d"></div>
<div class="a" style="left:161px;top:722px;width:1px;height:25px;background:#585a58"></div>
<div class="a" style="left:299px;top:722px;width:1px;height:25px;background:#585a58"></div>
<div class="a" style="left:161px;top:771px;width:1px;height:76px;background:#585a58"></div>
<div class="a" style="left:299px;top:771px;width:1px;height:76px;background:#585a58"></div>
<div style="font-size:17.8px">
<span class="cell" style="left:24px;width:137px;top:724px">69</span><span class="cell" style="left:161px;width:138px;top:724px">2272.0</span><span class="cell" style="left:299px;width:139px;top:724px">28.35751</span>
<span class="cell" style="left:24px;width:137px;top:749px">70</span><span class="cell" style="left:161px;width:138px;top:749px">2272.0</span><span class="cell" style="left:299px;width:139px;top:749px">26.4239</span>
<span class="cell" style="left:24px;width:137px;top:774px">70</span><span class="cell" style="left:161px;width:138px;top:774px">2272.0</span><span class="cell" style="left:299px;width:139px;top:774px">27.72461</span>
<span class="cell" style="left:24px;width:137px;top:799px">70</span><span class="cell" style="left:161px;width:138px;top:799px">2272.0</span><span class="cell" style="left:299px;width:139px;top:799px">28.00973</span>
<span class="cell" style="left:24px;width:137px;top:824px">71</span><span class="cell" style="left:161px;width:138px;top:824px">2272.0</span><span class="cell" style="left:299px;width:139px;top:824px">26.30671</span>
</div>
<div class="a btn" style="left:443px;top:692px;width:26px;height:62px"></div>
<div class="a btn" style="left:443px;top:758px;width:26px;height:62px"></div>
<div class="a btn" style="left:443px;top:824px;width:26px;height:62px"></div>
<div class="a btn" style="left:443px;top:890px;width:26px;height:62px"></div>
<div class="a btn" style="left:443px;top:956px;width:26px;height:62px"></div>
<svg class="a" style="left:440px;top:690px" width="32" height="330">
<circle cx="16" cy="33" r="7.8" fill="#d8303a"/><path d="M13 30 L19 36 M19 30 L13 36" stroke="#fff" stroke-width="2.2"/>
<g stroke="#e8d000" stroke-width="1.5" fill="#e8d000" transform="translate(0 3)"><path d="M10 94.5 h3 M13 90 v10 M13 95 h9 M13 90 h-3 M13 100 h-3" fill="none"/><circle cx="9.5" cy="90" r="1.6"/><circle cx="9.5" cy="95" r="1.6"/><circle cx="9.5" cy="100" r="1.6"/><path d="M20 92.5 L23 95 L20 97.5Z"/></g>
<path d="M19.5 160.5 A5 5 0 1 1 11.5 162" fill="none" stroke="#e03018" stroke-width="1.8"/><path d="M17 157 L21 160.5 L17 163Z" fill="#e03018"/>
<g stroke="#3f7d80" stroke-width="0.7" fill="none"><path d="M9.5 222h13v13h-13z M9.5 226.5h13 M9.5 231h13 M14 222v13 M18.5 222v13"/></g><path d="M8.5 233 L13 227.5 L16 231.5 L21 225" stroke="#3aa0a8" stroke-width="1.3" fill="none"/>
<path d="M14.5 288v7 M11 292 L16 297 L21 292" stroke="#222" stroke-width="2.6" fill="none"/><rect x="9" y="300.5" width="14" height="4" rx="2" fill="none" stroke="#222" stroke-width="1.2"/>
</svg>

<!-- ========== Stored calculations frame ========== -->
<div class="a frame" style="left:502px;top:664px;width:1397px;height:359px"></div>
<svg class="a" style="left:506px;top:666px" width="24" height="22"><g fill="none" stroke="#141414" stroke-width="1.1"><circle cx="12" cy="3" r="1.3"/><circle cx="12" cy="19" r="1.3"/><circle cx="4" cy="11" r="1.3"/><circle cx="20" cy="11" r="1.3"/><circle cx="6.3" cy="5.3" r="1.3"/><circle cx="17.7" cy="5.3" r="1.3"/><circle cx="6.3" cy="16.7" r="1.3"/><circle cx="17.7" cy="16.7" r="1.3"/><path d="M12 6.5v4 M10.3 9.5 C9.5 15 15.5 15 14 10.5 L12.5 9.8"/></g></svg>
<div class="a ftitle" style="left:1000px;width:340px;top:670px;font-size:13.3px">Stored Calculations</div>
<div class="a fbtn" style="left:1823px;top:665px;width:23px;height:19px"><div class="a" style="left:6px;top:11px;width:10px;height:2px;background:#f0f0f0"></div></div>
<div class="a fbtn" style="left:1846px;top:665px;width:23px;height:19px"><div class="a" style="left:6px;top:4px;width:10px;height:9px;border:1.5px solid #f0f0f0"></div></div>
<div class="a fbtn" style="left:1869px;top:665px;width:23px;height:19px"><svg class="a" style="left:5px;top:3px" width="12" height="12"><path d="M1 1L11 11M11 1L1 11" stroke="#f0f0f0" stroke-width="1.6"/></svg></div>
<div class="a" style="left:505px;top:691px;width:1391px;height:290px;background:#686c6f;border:1px solid #222"></div>
<div class="a hdr" style="left:506px;top:692px;width:1389px;height:30px;border-bottom:1px solid #1e1e1e">
<span style="left:0;width:231px;top:5px">Problem Statement</span>
<span style="left:232px;width:231px;top:5px">Baseline</span>
<span style="left:463px;width:232px;top:5px">Parameter count</span>
<span style="left:695px;width:232px;top:5px">Optimiser Statistic</span>
<span style="left:927px;width:231px;top:5px">Model Selection Statistic</span>
<span style="left:1158px;width:231px;top:5px">ω</span>
<div class="a" style="left:231px;top:3px;width:1px;height:24px;background:#151515"></div>
<div class="a" style="left:462px;top:3px;width:1px;height:24px;background:#151515"></div>
<div class="a" style="left:694px;top:3px;width:1px;height:24px;background:#151515"></div>
<div class="a" style="left:926px;top:3px;width:1px;height:24px;background:#151515"></div>
<div class="a" style="left:1157px;top:3px;width:1px;height:24px;background:#151515"></div>
</div>
<div class="a" style="left:506px;top:722px;width:1388px;height:69px;background:#414141"></div>
<div class="a" style="left:506px;top:791px;width:1389px;height:70px;background:#686c6f"></div>
<div class="a" style="left:506px;top:861px;width:1389px;height:70px;background:#6d716d"></div>
<div class="a" style="left:737px;top:791px;width:1px;height:140px;background:#55585a"></div>
<div class="a" style="left:968px;top:791px;width:1px;height:140px;background:#55585a"></div>
<div class="a" style="left:1200px;top:791px;width:1px;height:140px;background:#55585a"></div>
<div class="a" style="left:1431px;top:791px;width:1px;height:140px;background:#55585a"></div>
<div class="a" style="left:1663px;top:791px;width:1px;height:140px;background:#55585a"></div>
<div style="font-size:17.8px">
<span class="cell" style="left:506px;width:231px;top:747px">ClassicalProblem</span><span class="cell" style="left:737px;width:231px;top:747px">SinusoidalBaseline</span><span class="cell" style="left:968px;width:232px;top:747px">6</span><span class="cell" style="left:1200px;width:231px;top:747px">0.43003</span><span class="cell" style="left:1431px;width:232px;top:747px">662.75113</span><span class="cell" style="left:1663px;width:231px;top:747px">1.0</span>
<span class="cell" style="left:506px;width:231px;top:817px">ClassicalProblem</span><span class="cell" style="left:737px;width:231px;top:817px">FlatBaseline</span><span class="cell" style="left:968px;width:232px;top:817px">4</span><span class="cell" style="left:1200px;width:231px;top:817px">0.60428</span><span class="cell" style="left:1431px;width:232px;top:817px">1016.22174</span><span class="cell" style="left:1663px;width:231px;top:817px">0.0</span>
<span class="cell" style="left:506px;width:231px;top:887px">ClassicalProblem</span><span class="cell" style="left:737px;width:231px;top:887px">LinearBaseline</span><span class="cell" style="left:968px;width:232px;top:887px">5</span><span class="cell" style="left:1200px;width:231px;top:887px">0.60745</span><span class="cell" style="left:1431px;width:232px;top:887px">1028.13541</span><span class="cell" style="left:1663px;width:231px;top:887px">0.0</span>
</div>
<!-- model selection bar -->
<div class="a" style="left:503px;top:983.5px;width:1395px;height:38.5px;border:1.8px solid #f0f0f0;background:#2a2a2a"></div>
<div class="a btn" style="left:505px;top:986px;width:1391px;height:34px;border-radius:6px;border-color:#333"></div>
<span class="a" style="left:506px;top:992px;font-size:18px;color:#f2f2f2">Model Selection Criterion:</span>
<div class="a" style="left:730px;top:987px;width:115px;height:31px;background:linear-gradient(#62666a,#4f5357);border:1px solid #262626;border-radius:3px"><span class="a" style="left:5px;top:5px;font-size:17px;color:#f2f2f2">BICStatistic</span><div class="a" style="left:99px;top:3px;width:1px;height:24px;background:#1b1b1b"></div><svg class="a" style="left:103px;top:12px" width="8" height="6"><path d="M0 0.5H7L3.5 4.5Z" fill="#eee"/></svg></div>
<div class="a btn" style="left:868px;top:987px;width:30px;height:31px"></div>
<div class="a btn" style="left:921px;top:987px;width:30px;height:31px"></div>
<svg class="a" style="left:860px;top:980px" width="100" height="45">
<g fill="none" stroke="#111" stroke-width="1.6"><rect x="15.8" y="13.8" width="11.5" height="13.2"/></g>
<rect x="18" y="15.6" width="7.5" height="3" fill="none" stroke="#111" stroke-width="1.2"/>
<g fill="#151515"><rect x="17.5" y="20.3" width="2" height="1.8"/><rect x="20.7" y="20.3" width="2" height="1.8"/><rect x="23.9" y="20.3" width="2" height="1.8"/><rect x="17.5" y="23.3" width="2" height="1.8"/><rect x="20.7" y="23.3" width="2" height="1.8"/></g>
<circle cx="27.3" cy="27.4" r="3.1" fill="#5f6266" stroke="#111" stroke-width="1.4"/><path d="M26.6 26.6l1.2 1.2" stroke="#111" stroke-width="0.9"/>
<g fill="none" stroke="#111"><circle cx="75.8" cy="20.8" r="5.4" stroke-width="1.5"/><path d="M74.3 19.2 L76.3 17.8 V23.7" stroke-width="1.7"/>
<path d="M70.5 13.5 C67 17 66.5 24 71.5 28.3 M81.1 13.5 C84.6 17 85.1 24 80.1 28.3" stroke-width="2.3" stroke-dasharray="1.6,1.1"/>
<path d="M72.5 29.5 L70.5 31 M79 29.5 L81 31 M72 29.2 Q75.8 27.5 79.5 29.2" stroke-width="1.2"/></g>
</svg>

<!-- ========== Residuals PDF dialog ========== -->
<div class="a" style="left:102px;top:120px;width:450px;height:449px;box-shadow:0 2px 18px 4px rgba(0,0,0,0.55)"></div>
<div class="a" style="left:102px;top:120px;width:450px;height:33px;background:#dadada;border-top:1px solid #f4f4f4"></div>
<div class="a" style="left:102px;top:129px;width:450px;text-align:center;font-weight:bold;font-size:17px;color:#3a3a3a">Residuals PDF</div>
<svg class="a" style="left:460px;top:125px" width="90" height="24">
<rect x="12" y="10" width="6.5" height="2.5" fill="#2a2a2a"/>
<path d="M41.5 8 H47.5 V14 Z M41.5 8 V14 H47.5 Z" fill="#2a2a2a"/><path d="M41 15 L48 7" stroke="#dadada" stroke-width="1.4"/>
<circle cx="75" cy="11" r="7.2" fill="#8eb46f"/><path d="M72.2 8.2 L77.8 13.8 M77.8 8.2 L72.2 13.8" stroke="#fff" stroke-width="1.8"/>
</svg>
<div class="a" style="left:102px;top:153px;width:450px;height:377px;background:#3c3c3c"></div>
<div class="a" style="left:104.5px;top:156px;width:444.5px;height:370px;background:#c0c0c0"></div>
<svg class="a" style="left:0;top:0" width="600" height="600">
<path d="M201.1 166.5V465M238.2 166.5V465M275.3 166.5V465M312.4 166.5V465M349.5 166.5V465M386.6 166.5V465M423.7 166.5V465M460.8 166.5V465M497.9 166.5V465M535 166.5V465M190.5 464.9H537.5M190.5 440.9H537.5M190.5 417H537.5M190.5 393H537.5M190.5 369.1H537.5M190.5 345.1H537.5M190.5 321.2H537.5M190.5 297.2H537.5M190.5 273.3H537.5M190.5 249.3H537.5M190.5 225.4H537.5M190.5 201.4H537.5M190.5 177.5H537.5" stroke="#f2f2f2" stroke-width="1" stroke-dasharray="2.2,1.8" fill="none"/>
<path d="M349.5 166.5V465" stroke="#404040" stroke-width="1"/>
<defs><linearGradient id="bg" x1="0" x2="1" y1="0" y2="0"><stop offset="0" stop-color="#ff4c4c"/><stop offset="1" stop-color="#ff8080"/></linearGradient></defs><g fill="url(#bg)"><rect x="206" y="462.9" width="9.5" height="2"/><rect x="216" y="462.9" width="9.5" height="2"/><rect x="235" y="458.5" width="9.5" height="6.4"/><rect x="254" y="462.9" width="9.5" height="2"/><rect x="263" y="460.7" width="9.5" height="4.2"/><rect x="273" y="462.9" width="9.5" height="2"/><rect x="282" y="460.7" width="9.5" height="4.2"/><rect x="292" y="458.5" width="9.5" height="6.4"/><rect x="301" y="449.4" width="9.5" height="15.5"/><rect x="311" y="436" width="9.5" height="28.9"/><rect x="320" y="358.3" width="9.5" height="106.6"/><rect x="330" y="327" width="9.5" height="137.9"/><rect x="340" y="231.3" width="9.5" height="233.6"/><rect x="349" y="180" width="9.5" height="284.9"/><rect x="359" y="271.4" width="9.5" height="193.5"/><rect x="368" y="356.1" width="9.5" height="108.8"/><rect x="378" y="431.6" width="9.5" height="33.3"/><rect x="397" y="456" width="9.5" height="8.9"/><rect x="406" y="462.9" width="9.5" height="2"/><rect x="416" y="462.9" width="9.5" height="2"/><rect x="425" y="458.5" width="9.5" height="6.4"/><rect x="511" y="462.9" width="9.5" height="2"/><path d="M207.5 462.9V464.9M217.5 462.9V464.9M236.5 458.5V464.9M255.5 462.9V464.9M264.5 460.7V464.9M274.5 462.9V464.9M283.5 460.7V464.9M293.5 458.5V464.9M302.5 449.4V464.9M312.5 436V464.9M321.5 358.3V464.9M331.5 327V464.9M341.5 231.3V464.9M350.5 180V464.9M360.5 271.4V464.9M369.5 356.1V464.9M379.5 431.6V464.9M398.5 456V464.9M407.5 462.9V464.9M417.5 462.9V464.9M426.5 458.5V464.9M512.5 462.9V464.9" stroke="#ffffff" stroke-width="1" fill="none"/></g>
<rect x="190.5" y="166.5" width="347" height="298.5" fill="none" stroke="#555" stroke-width="1"/>
<path d="M186.5 166V465 M190 469.5H538 M201.1 469.5v3M238.2 469.5v3M275.3 469.5v3M312.4 469.5v3M349.5 469.5v3M386.6 469.5v3M423.7 469.5v3M460.8 469.5v3M497.9 469.5v3M535 469.5v3M183.5 464.9h3M183.5 440.9h3M183.5 417h3M183.5 393h3M183.5 369.1h3M183.5 345.1h3M183.5 321.2h3M183.5 297.2h3M183.5 273.3h3M183.5 249.3h3M183.5 225.4h3M183.5 201.4h3M183.5 177.5h3" stroke="#a8a8a8" stroke-width="1"/>
<g font-size="17.7" fill="#444"><g text-anchor="middle"><text x="201.1" y="488">-4</text><text x="238.2" y="488">-3</text><text x="275.3" y="488">-2</text><text x="312.4" y="488">-1</text><text x="349.5" y="488">0</text><text x="386.6" y="488">1</text><text x="423.7" y="488">2</text><text x="460.8" y="488">3</text><text x="497.9" y="488">4</text><text x="535" y="488">5</text></g><g text-anchor="end"><text x="180" y="471.1">0.00</text><text x="180" y="447.1">0.02</text><text x="180" y="423.2">0.04</text><text x="180" y="399.2">0.06</text><text x="180" y="375.3">0.08</text><text x="180" y="351.3">0.10</text><text x="180" y="327.4">0.12</text><text x="180" y="303.4">0.14</text><text x="180" y="279.5">0.16</text><text x="180" y="255.5">0.18</text><text x="180" y="231.6">0.20</text><text x="180" y="207.6">0.22</text><text x="180" y="183.7">0.24</text></g>
<text x="364" y="514.5" font-size="22" text-anchor="middle">Residual value</text>
<text transform="translate(135 314.5) rotate(-90)" font-size="22" text-anchor="middle">Frequency</text></g>
</svg>
<div class="a" style="left:102.5px;top:529.5px;width:449px;height:39.5px;background:#434343;border-top:1px solid #545454"></div>
<span class="a" style="left:143.5px;top:539px;font-size:18.7px;color:#f4f4f4">Number of bins: 33</span>
<svg class="a" style="left:300px;top:530px" width="230" height="40">
<rect x="12.5" y="12.5" width="197.5" height="13" rx="6.5" fill="#3e4246" stroke="#5b80c8" stroke-width="1.4"/>
<rect x="14.5" y="14.5" width="193.5" height="9" rx="4.5" fill="none" stroke="#8a8e92" stroke-width="0.7"/>
<rect x="15.5" y="15.5" width="50" height="7" rx="3.5" fill="#46494d" stroke="#1a1a1a" stroke-width="1.3"/>
<rect x="64.5" y="9.5" width="8" height="18.5" rx="2" fill="#5a5e62" stroke="#2a2a2a" stroke-width="1"/>
</svg>

<div class="a" style="left:0;top:1043px;width:1919px;height:2px;background:#d8d8d8"></div>
</body></html>
